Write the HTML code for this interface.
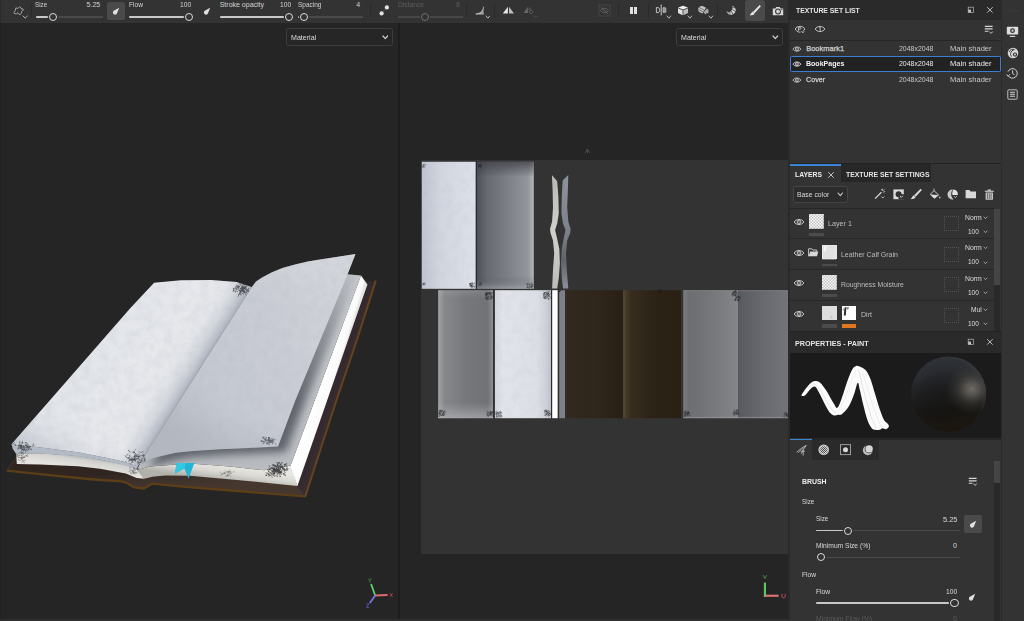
<!DOCTYPE html>
<html>
<head>
<meta charset="utf-8">
<title>Substance Painter</title>
<style>
*{box-sizing:border-box;margin:0;padding:0}
html,body{width:1024px;height:621px;overflow:hidden;background:#252525;font-family:"Liberation Sans",sans-serif;font-size:7px;color:#d0d0d0}
#root{position:absolute;left:0;top:0;width:1024px;height:621px;overflow:hidden;background:#252525}
.b{position:absolute;display:block}
.t{position:absolute;white-space:nowrap;line-height:10px;transform-origin:0 0;display:block}
</style>
</head>
<body>
<div id="root">
<div class="b" style="left:0px;top:22px;width:789px;height:599px;background:#252525;">
</div>
<div class="b" style="left:398px;top:22px;width:1.6px;height:599px;background:#1d1d1d;">
</div>
<div class="b" style="left:0px;top:22px;width:1.2px;height:599px;background:#202020;">
</div>
<div class="b" style="left:0px;top:618.8px;width:789px;height:2.2px;background:#2e2e2e;">
</div>
<div class="b" style="left:421px;top:160.2px;width:367px;height:393.4px;background:#333333;">
</div>
<svg class="b" style="left:421px;top:160px;" width="367" height="394" viewBox="0 0 367 394">
<defs>
<linearGradient id="t1" x1="0" x2="1" y1="0" y2="0">
<stop offset="0" stop-color="#bfc4cf"/>
<stop offset="0.35" stop-color="#d2d6df"/>
<stop offset="1" stop-color="#dde1e9"/>
</linearGradient>
<linearGradient id="t2" x1="0" x2="1" y1="0" y2="0">
<stop offset="0" stop-color="#4e5158"/>
<stop offset="0.18" stop-color="#676a71"/>
<stop offset="0.6" stop-color="#808389"/>
<stop offset="0.9" stop-color="#93969c"/>
<stop offset="1" stop-color="#b2b5ba"/>
</linearGradient>
<linearGradient id="t2v" x1="0" x2="0" y1="0" y2="1">
<stop offset="0" stop-color="#3c3e44" stop-opacity="0.75"/>
<stop offset="0.12" stop-color="#3c3e44" stop-opacity="0"/>
<stop offset="0.9" stop-color="#3c3e44" stop-opacity="0"/>
<stop offset="1" stop-color="#b0b3b8" stop-opacity="0.5"/>
</linearGradient>
<linearGradient id="tA" x1="0" x2="1" y1="0" y2="0">
<stop offset="0" stop-color="#a2a4a8"/>
<stop offset="0.12" stop-color="#858789"/>
<stop offset="0.5" stop-color="#76787b"/>
<stop offset="0.9" stop-color="#707275"/>
<stop offset="1" stop-color="#8e9093"/>
</linearGradient>
<linearGradient id="tAv" x1="0" x2="0" y1="0" y2="1">
<stop offset="0" stop-color="#b0b2b6" stop-opacity="0.25"/>
<stop offset="0.06" stop-color="#b0b2b6" stop-opacity="0"/>
<stop offset="0.88" stop-color="#b0b2b6" stop-opacity="0"/>
<stop offset="1" stop-color="#b4b6ba" stop-opacity="0.65"/>
</linearGradient>
<linearGradient id="tB" x1="0" x2="1" y1="0" y2="0">
<stop offset="0" stop-color="#d4d7df"/>
<stop offset="0.15" stop-color="#e2e4ea"/>
<stop offset="0.75" stop-color="#dcdfe6"/>
<stop offset="0.92" stop-color="#cdd0d8"/>
<stop offset="1" stop-color="#bcc0c8"/>
</linearGradient>
<linearGradient id="tC" x1="0" x2="1" y1="0" y2="0">
<stop offset="0" stop-color="#33291e"/>
<stop offset="0.5" stop-color="#2f271b"/>
<stop offset="1" stop-color="#282014"/>
</linearGradient>
<linearGradient id="tD" x1="0" x2="1" y1="0" y2="0">
<stop offset="0" stop-color="#4a3d2a"/>
<stop offset="0.12" stop-color="#372d1f"/>
<stop offset="0.5" stop-color="#2b2316"/>
<stop offset="1" stop-color="#2a2113"/>
</linearGradient>
<linearGradient id="tE" x1="0" x2="1" y1="0" y2="0">
<stop offset="0" stop-color="#7c7e82"/>
<stop offset="0.1" stop-color="#6c6e72"/>
<stop offset="0.6" stop-color="#78797d"/>
<stop offset="1" stop-color="#858689"/>
</linearGradient>
<linearGradient id="tF" x1="0" x2="1" y1="0" y2="0">
<stop offset="0" stop-color="#585a61"/>
<stop offset="0.4" stop-color="#65676d"/>
<stop offset="1" stop-color="#73757a"/>
</linearGradient>
<linearGradient id="sL" x1="0" x2="0" y1="0" y2="1">
<stop offset="0" stop-color="#b9b8b4"/>
<stop offset="0.5" stop-color="#d2d0ca"/>
<stop offset="1" stop-color="#bdbcb8"/>
</linearGradient>
<linearGradient id="sR" x1="0" x2="0" y1="0" y2="1">
<stop offset="0" stop-color="#8d939b"/>
<stop offset="0.5" stop-color="#7b818a"/>
<stop offset="0.75" stop-color="#5f646c"/>
<stop offset="1" stop-color="#8a9098"/>
</linearGradient>
<filter id="nzu" x="0" y="0" width="100%" height="100%">
<feTurbulence type="fractalNoise" baseFrequency="0.12" numOctaves="3" seed="9"/>
<feColorMatrix type="matrix" values="0 0 0 0 0.42  0 0 0 0 0.45  0 0 0 0 0.52  1.3 0 0 0 -0.5"/>
</filter>
</defs>
<rect x="0.8" y="1.8" width="54" height="127" fill="url(#t1)" />
<rect x="0.8" y="1.8" width="54" height="127" fill="#000" filter="url(#nzu)" opacity="0.22"/>
<rect x="56" y="1.8" width="56.8" height="127" fill="url(#t2)" />
<rect x="56" y="1.8" width="56.8" height="127" fill="url(#t2v)" />
<rect x="54.8" y="1.8" width="1.2" height="127" fill="#2a2b2e" />
<path d="M130.9 15 L131.6 30 L132 47 L131.1 61.5 L129 69 L129.5 73 L132 80.4 L133.2 93 L132 109.7 L131.1 128.4 L136.2 128.4 L137.8 118 L138.9 103.4 L138.3 88.8 L135.8 77.3 L134.1 70 L136.2 63.6 L137.8 53.2 L137.4 36.4 L136.2 21.8 L135.8 20.7 Z" fill="url(#sL)"/>
<path d="M147.3 15 L146.9 30 L146.2 47 L147.3 61.5 L149.6 69 L149.2 73 L146.2 80.4 L145 93 L145.8 109.7 L147.3 128.4 L142 128.4 L140.8 118 L140 103.4 L140.8 88.8 L142.9 77.3 L144.5 70 L142 63.6 L140.4 53.2 L140.8 36.4 L141.6 21.8 L142 20 Z" fill="url(#sR)"/>
<rect x="17.2" y="130.2" width="55" height="128" fill="url(#tA)" />
<rect x="17.2" y="130.2" width="55" height="128" fill="url(#tAv)" />
<rect x="72.2" y="130.2" width="1.7" height="128" fill="#2a2b2e" />
<rect x="73.9" y="130.2" width="56.1" height="128" fill="url(#tB)" />
<rect x="73.9" y="130.2" width="56.1" height="128" fill="#000" filter="url(#nzu)" opacity="0.2"/>
<rect x="130" y="130.2" width="1.2" height="128" fill="#2a2b2e" />
<rect x="131.2" y="130.2" width="5.6" height="128" fill="#ffffff" />
<rect x="136.8" y="130.2" width="1.4" height="128" fill="#2e2f32" />
<path d="M138.2 258.2 L138.2 132.8 L140.4 130.2 L144.2 130.2 L144.2 258.2 Z" fill="#7d8189"/>
<rect x="144.2" y="130.2" width="1.2" height="128" fill="#2a2a2a" />
<rect x="145.4" y="130.2" width="56" height="128" fill="url(#tC)" />
<rect x="201.4" y="130.2" width="1" height="128" fill="#1f1a10" />
<rect x="202.4" y="130.2" width="1.2" height="128" fill="#6a5a3e" />
<rect x="203.6" y="130.2" width="56.4" height="128" fill="url(#tD)" />
<rect x="262.3" y="130.2" width="54.9" height="128" fill="url(#tE)" />
<rect x="317.2" y="130.2" width="50.8" height="128" fill="url(#tF)" />
<rect x="262.3" y="256.8" width="105.7" height="1.4" fill="#9a9b9e" opacity="0.55"/>
<rect x="262.3" y="130.2" width="105.7" height="1" fill="#8a8b8e" opacity="0.5"/>
<path d="M49.0 123.7 L49.0 124.4 M50.0 123.4 L51.0 122.5 M51.0 125.2 L50.1 126.1 M52.4 124.0 L52.9 124.1 M53.2 127.5 L52.5 128.3 M50.2 126.0 L50.4 125.7 M53.4 123.6 L53.7 122.8 M50.7 128.2 L50.0 127.7 M50.4 124.2 L51.4 124.2 M49.5 123.4 L49.1 123.7 M51.8 126.6 L51.7 126.9 M49.8 124.8 L49.1 124.6 M50.7 126.2 L50.6 125.4 M50.8 125.7 L50.9 126.1 M50.4 123.6 L49.7 124.1 M50.2 125.6 L50.1 126.4 M53.3 126.6 L52.3 126.8 M51.2 127.7 L50.8 127.5 M48.8 126.7 L48.9 125.8 M53.4 126.8 L54.4 125.9 M49.1 123.9 L50.1 124.5 M50.7 123.0 L51.4 123.1 M49.1 124.8 L48.9 124.0 M51.1 123.1 L51.6 122.5 M49.5 125.6 L50.4 125.9 M51.9 123.7 L51.6 124.8 M53.4 123.2 L53.4 123.4 M51.7 125.1 L52.0 125.7 M51.4 126.2 L50.3 126.4 M53.0 126.8 L52.6 126.5 M51.0 126.2 L50.2 125.3 M49.1 123.3 L48.8 124.3 M51.4 125.7 L51.5 126.8 M49.9 126.4 L49.9 125.7 M51.2 123.1 L51.4 123.5 M53.0 125.6 L52.9 126.1 M51.2 127.1 L50.3 128.1 M49.8 124.8 L48.8 125.5 M48.4 123.8 L49.2 124.1 M50.9 124.8 L49.8 125.9 M49.4 123.4 L49.7 124.1" stroke="#1c1e22" stroke-width="0.6" opacity="0.48" fill="none" stroke-linecap="round"/>
<path d="M110.3 127.5 L110.4 128.3 M111.4 124.7 L111.5 123.7 M109.0 124.7 L108.6 124.9 M108.9 127.7 L108.8 126.8 M108.2 124.0 L108.0 124.6 M108.5 125.6 L108.5 126.0 M110.6 123.5 L110.5 122.5 M111.0 128.0 L112.0 129.0 M106.9 124.4 L106.6 123.9 M107.5 127.6 L107.5 127.7 M106.9 127.9 L106.6 127.2 M106.4 126.5 L106.3 125.4 M111.3 125.9 L110.7 125.0 M106.6 124.6 L105.5 124.3 M110.4 126.8 L110.2 127.4 M111.4 126.6 L112.2 125.7 M109.4 125.0 L108.4 125.8 M110.8 125.0 L111.9 124.9 M106.6 126.9 L106.2 127.9 M108.5 124.8 L109.5 124.6 M108.5 128.1 L107.7 129.0 M110.1 125.6 L110.9 126.6 M111.0 124.4 L110.8 125.3 M109.3 126.6 L109.6 126.3 M108.4 127.2 L109.2 126.7 M107.0 124.2 L106.0 123.1 M106.5 127.7 L105.6 127.5 M108.2 123.7 L108.2 122.7 M110.8 127.3 L109.9 126.9 M110.9 123.9 L112.0 124.4 M107.1 127.9 L107.3 126.9 M106.6 124.6 L105.8 123.5 M110.6 126.8 L110.2 127.5 M108.1 127.0 L108.5 127.0 M110.3 126.0 L110.8 126.4 M107.0 126.2 L106.1 126.0 M111.5 127.8 L111.1 127.5 M111.5 125.8 L111.0 126.7 M111.4 126.8 L112.1 126.5 M109.3 127.9 L109.4 127.7 M107.5 123.9 L108.0 124.5" stroke="#1c1e22" stroke-width="0.6" opacity="0.44" fill="none" stroke-linecap="round"/>
<path d="M58.8 6.2 L59.7 5.4 M60.6 5.0 L60.6 5.1 M59.2 4.5 L59.5 3.6 M57.7 5.9 L58.7 5.1 M58.1 6.6 L57.6 6.9 M59.7 5.4 L59.0 4.4 M59.9 6.4 L59.4 6.0 M59.7 6.6 L60.4 7.1 M59.3 6.1 L58.4 6.6 M59.2 5.3 L59.5 5.7 M58.7 6.6 L59.0 7.4 M59.4 7.0 L60.4 6.6 M57.6 5.4 L58.0 5.2 M59.8 6.8 L59.5 6.3 M59.1 6.0 L59.1 5.5 M57.7 5.5 L58.1 5.0 M57.7 7.1 L57.8 7.0 M60.4 5.7 L59.5 5.2 M59.5 5.3 L60.0 5.1 M60.3 5.0 L61.2 4.0 M59.5 7.5 L59.8 8.6 M57.7 5.5 L58.4 5.0 M58.1 5.8 L57.1 5.8 M58.2 5.1 L58.0 6.1" stroke="#1c1e22" stroke-width="0.6" opacity="0.32" fill="none" stroke-linecap="round"/>
<path d="M2.2 6.0 L2.9 4.9 M2.1 5.7 L1.9 6.4 M1.7 7.3 L1.8 8.0 M1.9 4.6 L2.2 5.1 M1.9 6.8 L2.8 6.6 M3.4 5.2 L3.1 4.4 M2.2 6.8 L2.2 7.5 M1.7 5.7 L2.1 6.8 M4.0 4.7 L3.0 5.0 M3.2 4.9 L3.3 3.9 M3.5 7.4 L4.2 6.8 M4.4 6.4 L4.7 5.8 M3.7 5.5 L2.8 4.5 M2.2 6.3 L1.9 5.3 M1.7 5.2 L2.7 4.4 M2.0 5.7 L2.0 5.0 M2.4 6.9 L1.4 7.8 M2.3 7.4 L2.8 6.6 M3.5 7.3 L3.8 7.5 M4.3 4.8 L4.9 5.0 M2.0 6.7 L3.1 7.0" stroke="#1c1e22" stroke-width="0.6" opacity="0.28" fill="none" stroke-linecap="round"/>
<path d="M4.2 122.9 L3.7 123.6 M3.4 125.3 L2.7 124.9 M2.0 125.0 L1.2 125.6 M3.5 124.0 L2.4 123.7 M2.8 123.6 L2.5 123.5 M1.8 124.4 L1.8 125.4 M3.0 124.3 L2.0 124.6 M2.7 123.4 L2.0 122.9 M2.6 123.1 L3.1 122.5 M3.8 123.7 L4.6 124.0 M2.6 124.2 L3.0 124.9 M2.7 124.0 L1.9 123.4 M3.3 124.8 L3.1 123.8 M2.3 123.7 L2.2 124.7 M3.9 123.7 L3.5 122.7 M2.9 123.0 L2.4 123.9 M3.9 123.3 L3.1 123.6 M4.3 124.4 L4.5 124.4 M1.8 124.5 L2.0 123.4 M3.6 124.3 L2.7 124.0 M1.9 124.0 L1.5 123.7" stroke="#1c1e22" stroke-width="0.6" opacity="0.24" fill="none" stroke-linecap="round"/>
<path d="M60.2 124.4 L60.6 124.5 M58.1 125.1 L58.8 125.1 M58.8 124.9 L58.0 125.1 M58.9 123.4 L59.5 123.7 M60.3 124.0 L60.3 123.9 M60.2 123.1 L59.7 122.1 M57.7 123.8 L56.8 123.8 M59.3 124.9 L58.5 125.0 M58.7 122.8 L58.4 123.8 M58.3 123.9 L57.6 123.6 M60.0 124.7 L59.0 123.9 M60.1 125.1 L60.3 125.1 M59.5 124.2 L60.4 124.3 M60.2 123.1 L60.2 123.7 M59.4 123.1 L58.7 122.2 M58.7 124.9 L59.3 124.9 M59.9 122.7 L59.4 121.9 M59.2 125.4 L58.6 125.4 M59.2 123.7 L58.9 124.2 M60.0 124.1 L59.5 123.0 M59.3 123.2 L60.3 122.5" stroke="#1c1e22" stroke-width="0.6" opacity="0.24" fill="none" stroke-linecap="round"/>
<path d="M65.8 137.8 L65.5 138.6 M65.2 138.9 L65.7 139.5 M65.2 134.4 L64.7 134.6 M66.0 133.6 L65.8 133.9 M67.0 135.5 L66.9 136.3 M65.7 134.1 L65.1 133.3 M67.6 137.0 L68.4 136.4 M69.4 134.8 L69.7 135.5 M68.9 138.8 L69.7 139.6 M71.0 133.8 L70.1 134.5 M66.8 132.7 L66.1 132.6 M70.4 136.3 L70.0 135.3 M65.8 133.8 L66.6 133.1 M70.4 137.6 L69.9 136.9 M65.0 137.9 L64.5 137.3 M67.4 136.8 L68.0 136.8 M67.4 133.2 L68.3 133.3 M67.3 138.8 L66.4 139.7 M67.7 133.3 L68.5 133.6 M70.6 138.3 L71.6 137.6 M65.8 136.2 L65.0 136.5 M66.9 134.3 L67.6 133.3 M69.3 134.0 L68.6 134.1 M65.3 133.0 L64.7 131.9 M68.9 133.0 L68.5 132.2 M65.9 138.6 L64.8 138.7 M65.4 134.5 L65.7 135.5 M66.6 137.6 L66.4 138.2 M71.4 132.6 L71.3 133.2 M64.8 134.3 L65.0 133.4 M69.8 133.6 L70.4 132.5 M70.1 137.0 L71.2 136.1 M64.7 134.0 L63.8 133.5 M70.8 138.7 L70.8 139.0 M65.7 134.3 L65.4 135.0 M65.9 136.9 L65.3 135.9 M68.3 133.0 L68.7 133.8 M65.3 134.7 L65.7 133.7 M65.8 137.7 L66.5 137.4 M69.3 138.1 L69.2 138.1 M66.4 132.8 L66.3 133.3 M71.1 136.9 L72.2 137.6 M69.7 132.9 L70.1 133.8 M65.2 138.8 L66.3 139.0 M69.0 136.4 L69.4 136.9 M65.2 135.1 L65.0 134.3 M67.6 139.0 L67.3 137.9 M64.7 137.7 L64.7 138.0 M67.2 133.9 L66.9 133.6 M68.9 133.4 L68.7 133.2 M66.5 139.1 L66.8 139.5 M68.9 132.8 L69.1 132.3 M68.7 134.9 L68.3 134.6 M64.9 136.1 L64.8 135.2 M70.5 136.9 L71.2 136.4 M70.5 138.4 L70.5 138.3 M70.1 138.1 L69.2 138.8 M65.8 133.3 L66.4 133.9 M68.5 133.1 L68.0 132.8 M65.6 133.9 L66.6 133.7" stroke="#1c1e22" stroke-width="0.6" opacity="0.6" fill="none" stroke-linecap="round"/>
<path d="M22.6 255.2 L22.0 254.9 M21.6 253.2 L20.7 252.3 M18.2 256.0 L19.0 256.9 M22.2 254.6 L22.8 254.7 M22.3 252.8 L22.5 252.5 M23.1 253.9 L22.4 253.8 M18.2 253.6 L17.9 253.2 M18.2 253.8 L18.5 252.9 M22.1 250.1 L22.1 250.0 M18.3 253.3 L17.7 252.2 M22.1 255.5 L21.9 254.7 M22.2 254.7 L22.3 255.6 M22.7 252.4 L23.1 251.6 M21.5 254.6 L21.1 255.6 M24.0 255.0 L24.2 254.9 M23.1 253.1 L23.3 253.5 M23.9 251.3 L23.1 252.1 M23.4 251.8 L23.5 252.1 M18.1 250.3 L18.7 250.4 M20.0 250.7 L19.7 251.6 M23.3 250.6 L23.0 250.8 M20.0 255.3 L19.7 254.4 M18.4 255.9 L18.1 256.1 M23.3 254.9 L24.0 254.8 M21.9 255.5 L22.1 255.4 M18.4 252.0 L19.5 251.0 M19.9 250.0 L19.0 250.6 M21.5 250.8 L20.9 250.9 M19.0 255.7 L18.0 255.9 M20.3 252.0 L20.8 251.4 M22.5 251.8 L22.7 252.9 M23.7 251.3 L24.7 252.4 M20.8 250.9 L21.5 250.5 M20.0 250.6 L19.7 250.0 M21.3 251.7 L20.6 251.2 M18.9 251.3 L18.3 251.9 M19.9 255.0 L19.3 254.5 M22.0 253.1 L21.7 254.2 M19.4 255.1 L19.5 254.4 M19.9 252.9 L19.4 253.4 M18.2 250.5 L18.9 250.6 M21.0 254.7 L22.0 254.0 M19.4 252.7 L20.3 253.7 M18.4 254.1 L19.5 253.2 M20.3 251.4 L19.3 251.9 M18.2 254.5 L19.2 253.8 M22.6 253.0 L21.5 253.7 M18.2 254.0 L17.3 254.5 M19.0 252.8 L18.1 252.9 M20.2 255.7 L20.7 255.2" stroke="#1c1e22" stroke-width="0.6" opacity="0.56" fill="none" stroke-linecap="round"/>
<path d="M69.4 252.9 L69.6 252.4 M66.4 255.1 L66.9 255.9 M70.0 253.2 L70.7 252.9 M71.2 255.7 L71.9 256.3 M70.8 255.2 L70.8 255.3 M66.2 255.7 L65.9 255.7 M70.7 252.5 L71.5 252.0 M67.1 256.1 L66.9 256.6 M69.3 252.3 L69.9 251.8 M66.2 251.3 L66.6 252.1 M66.3 255.4 L66.6 254.7 M68.1 255.2 L68.7 254.8 M66.3 253.3 L66.4 252.2 M67.4 252.6 L66.8 253.4 M70.1 253.1 L71.0 252.7 M71.4 253.5 L71.5 253.2 M67.9 255.9 L68.6 254.9 M71.2 253.2 L71.9 252.8 M71.2 255.5 L71.4 254.9 M68.9 251.3 L69.8 252.1 M70.4 252.2 L71.4 251.9 M70.0 255.3 L69.5 254.2 M70.7 253.3 L71.1 254.3 M67.4 255.4 L67.8 254.8 M66.5 254.5 L67.3 255.1 M66.0 254.6 L65.2 254.4 M69.4 253.9 L69.3 255.0 M69.8 254.5 L68.7 254.6 M67.9 252.4 L68.4 253.3 M67.0 253.4 L67.3 254.2 M71.2 251.7 L70.4 252.1 M69.5 254.3 L69.5 253.3 M69.3 251.0 L69.7 252.0 M68.7 255.4 L68.5 255.9 M68.1 253.5 L67.4 254.1 M69.7 253.0 L69.4 253.8 M66.0 251.4 L65.8 251.3 M68.2 252.6 L67.3 252.1 M68.9 251.3 L68.7 252.2 M70.4 253.5 L71.2 252.4 M71.1 253.7 L70.5 254.2 M69.2 253.7 L69.8 254.0 M69.8 255.1 L69.3 254.6 M71.1 252.2 L71.4 251.2 M66.9 252.5 L66.2 253.2" stroke="#1c1e22" stroke-width="0.6" opacity="0.48" fill="none" stroke-linecap="round"/>
<path d="M127.6 136.4 L126.6 136.8 M125.5 137.1 L125.3 137.2 M124.0 134.7 L124.9 135.3 M126.5 134.1 L126.2 133.2 M124.7 138.7 L124.4 138.1 M124.1 132.5 L123.5 133.1 M128.3 134.8 L127.7 133.7 M127.0 136.6 L125.9 136.0 M127.1 133.4 L127.2 133.1 M124.7 133.1 L124.3 132.8 M128.1 136.6 L128.2 136.2 M123.8 138.2 L124.2 138.2 M123.7 133.5 L122.7 133.8 M125.0 132.8 L125.0 133.0 M125.0 136.8 L124.3 135.9 M127.7 134.0 L128.1 134.5 M125.6 138.0 L126.6 137.8 M123.7 132.8 L122.7 131.9 M123.7 134.9 L122.8 135.2 M125.8 133.4 L125.0 132.3 M129.0 136.7 L128.4 135.6 M124.7 134.4 L125.1 134.8 M128.0 132.2 L127.6 131.9 M124.9 136.0 L125.9 135.4 M122.9 135.2 L121.9 134.3 M129.1 133.9 L129.8 132.8 M124.2 136.1 L123.7 136.9 M128.1 134.1 L127.4 133.7 M125.5 133.7 L125.4 134.3 M127.3 133.3 L127.2 134.1 M125.3 133.3 L125.7 132.9 M126.2 134.9 L126.6 134.6 M127.1 138.3 L127.7 139.4 M126.8 135.6 L126.4 135.0 M124.7 136.3 L124.9 137.2 M122.9 133.2 L123.5 132.5 M125.8 132.3 L126.0 131.2 M127.0 135.4 L126.8 134.4 M125.4 137.0 L124.9 136.8 M126.8 133.6 L126.5 132.7 M129.1 137.0 L129.9 137.9 M123.0 133.4 L123.6 134.3 M127.5 138.9 L127.4 139.6 M123.8 138.8 L122.7 138.2 M127.8 136.0 L127.4 135.2 M126.9 132.5 L127.8 131.7 M127.2 137.9 L127.7 138.6 M128.8 138.3 L128.9 138.7 M127.4 135.2 L128.2 135.0 M127.5 132.3 L128.5 131.3 M122.8 135.2 L123.1 134.2 M124.4 137.7 L124.9 138.3 M124.5 132.3 L124.2 132.5 M123.8 136.5 L123.1 135.6 M123.4 137.7 L122.6 136.7 M126.4 133.8 L125.8 134.8 M124.5 138.5 L123.4 137.7 M122.7 137.4 L123.7 137.8 M122.9 137.3 L123.0 136.7 M123.1 133.3 L123.6 132.9" stroke="#1c1e22" stroke-width="0.6" opacity="0.6" fill="none" stroke-linecap="round"/>
<path d="M76.3 252.6 L75.6 253.2 M76.1 254.6 L75.3 253.9 M78.1 251.9 L78.5 252.2 M78.2 253.8 L77.4 254.6 M75.7 257.3 L75.7 257.2 M78.7 255.4 L77.8 255.5 M77.6 253.9 L77.2 252.9 M80.2 254.5 L79.3 253.9 M80.6 255.9 L79.8 255.5 M77.7 253.7 L78.4 254.5 M78.9 252.3 L78.6 252.2 M77.8 253.7 L78.0 252.9 M75.7 256.1 L76.4 256.3 M76.9 253.2 L77.8 253.2 M75.3 252.2 L76.0 252.3 M79.4 255.1 L79.7 254.6 M80.4 255.8 L79.4 255.8 M76.3 255.7 L76.5 256.0 M75.5 253.5 L74.4 254.4 M75.7 256.0 L75.2 256.2 M79.8 252.4 L79.3 253.4 M77.2 252.4 L76.7 252.9 M77.7 256.0 L77.4 255.1 M77.4 255.8 L76.9 256.5 M80.5 253.0 L80.6 252.3 M79.1 251.9 L79.4 250.9 M79.3 251.8 L79.9 252.7 M77.1 252.7 L78.0 253.8 M77.6 256.9 L77.8 255.8 M76.0 252.0 L76.1 252.1 M76.7 254.5 L76.3 253.6 M80.3 256.1 L81.3 256.3 M79.0 257.1 L78.5 256.2 M79.8 253.7 L79.4 252.7 M80.5 255.7 L80.0 256.4 M75.9 254.5 L75.3 254.5 M76.2 253.3 L76.6 252.8 M79.2 256.0 L79.9 257.1 M74.8 253.1 L74.6 253.4 M75.0 252.1 L74.1 252.4 M75.5 255.8 L75.5 255.1 M76.9 252.2 L75.9 251.6 M78.4 257.4 L79.0 257.1 M76.2 256.7 L76.7 256.9 M74.9 254.5 L74.6 254.9 M75.8 253.3 L76.7 254.4 M76.5 257.1 L75.6 258.1 M79.8 252.2 L80.2 252.1 M75.0 251.4 L75.4 252.2 M74.9 257.0 L75.2 256.4" stroke="#1c1e22" stroke-width="0.6" opacity="0.48" fill="none" stroke-linecap="round"/>
<path d="M124.8 255.7 L125.4 255.9 M128.8 255.2 L129.7 254.5 M123.6 251.4 L123.2 250.7 M125.3 251.2 L126.1 250.8 M125.0 251.2 L124.9 251.1 M124.0 251.8 L123.9 251.4 M125.7 253.6 L125.0 253.7 M124.4 250.2 L125.1 249.7 M127.4 256.0 L127.1 255.0 M126.6 252.9 L126.2 252.3 M125.3 254.6 L126.1 253.9 M128.9 251.8 L129.5 252.0 M126.7 252.2 L126.3 251.1 M127.6 254.5 L128.3 253.5 M126.8 253.8 L127.6 253.7 M125.7 254.0 L126.2 253.5 M124.6 251.4 L125.4 251.7 M127.6 251.3 L127.4 251.0 M126.8 255.3 L127.7 255.9 M128.9 253.7 L128.9 253.0 M127.8 252.8 L128.0 252.0 M125.1 251.0 L125.5 251.7 M128.5 255.3 L129.5 254.7 M129.0 253.5 L128.3 253.7 M125.5 251.4 L126.1 252.4 M124.9 254.3 L123.8 253.5 M125.1 250.5 L124.4 250.0 M128.5 253.6 L127.6 252.6 M128.0 251.1 L126.9 250.3 M128.7 255.4 L129.3 254.8 M127.3 254.7 L126.8 255.3 M125.6 251.8 L126.0 252.5 M124.3 252.6 L123.5 252.1 M125.0 250.3 L124.2 251.1 M123.8 255.1 L124.5 255.6 M124.3 251.1 L124.8 251.5 M123.7 255.4 L124.7 254.8 M126.6 253.3 L126.0 253.9 M127.7 252.6 L128.7 251.8 M123.8 250.6 L123.4 250.0 M129.3 253.5 L129.5 253.8 M128.6 254.9 L128.1 254.9 M126.0 254.8 L125.4 253.8 M126.7 253.3 L126.2 252.6 M125.4 254.4 L125.0 254.3 M126.6 252.2 L126.3 252.2 M125.4 251.6 L124.9 252.1 M127.6 250.7 L127.6 250.8 M127.2 254.9 L128.3 253.9 M125.8 250.7 L126.1 250.9" stroke="#1c1e22" stroke-width="0.6" opacity="0.52" fill="none" stroke-linecap="round"/>
<path d="M314.5 135.5 L314.3 135.3 M313.5 131.4 L314.5 130.4 M313.1 135.8 L314.2 135.2 M313.8 131.9 L314.6 131.0 M314.6 134.3 L315.1 134.8 M315.7 133.5 L316.1 133.7 M312.5 132.7 L312.3 133.1 M315.1 133.6 L315.2 132.9 M315.0 133.7 L315.1 132.8 M314.0 135.9 L314.7 136.8 M313.2 132.4 L312.1 133.1 M314.9 131.6 L314.1 132.2 M313.7 134.9 L314.5 135.6 M311.7 134.1 L311.7 133.5 M311.7 132.5 L310.8 133.1 M314.1 134.6 L313.8 135.6 M314.3 134.1 L315.0 133.1 M312.7 133.1 L313.3 132.9 M315.0 131.3 L314.7 131.7 M316.2 135.3 L316.2 135.2 M312.3 134.0 L311.7 133.8 M314.1 132.2 L314.9 131.9 M313.8 134.2 L314.4 135.0 M316.0 136.0 L316.5 136.6 M313.9 131.2 L314.6 131.8 M314.2 134.9 L313.6 135.3 M312.2 131.8 L312.9 131.6 M311.5 136.1 L312.4 135.6 M312.9 131.9 L312.9 132.1 M316.0 135.6 L316.2 136.0 M314.2 131.3 L314.5 130.8 M312.0 133.6 L311.2 134.0 M314.9 131.1 L315.1 131.7 M311.7 135.2 L311.5 134.8 M312.0 135.0 L310.9 135.0 M313.4 133.6 L312.6 134.5 M313.2 133.0 L313.0 132.2 M315.7 132.6 L316.2 131.9 M312.6 131.3 L312.4 132.1 M314.5 133.4 L314.3 133.4 M316.4 134.0 L316.1 133.2" stroke="#1c1e22" stroke-width="0.6" opacity="0.56" fill="none" stroke-linecap="round"/>
<path d="M315.0 137.7 L314.9 138.1 M316.4 136.4 L316.6 137.5 M315.0 138.2 L313.9 138.9 M314.9 138.7 L315.1 138.4 M314.3 139.1 L314.1 139.7 M315.4 137.7 L315.8 137.2 M315.6 136.3 L315.2 136.3 M318.1 139.5 L317.9 140.5 M316.9 137.5 L317.5 136.6 M315.6 139.9 L315.5 139.9 M318.0 138.6 L317.7 138.4 M315.6 137.9 L315.6 138.1 M316.7 139.8 L316.9 139.3 M314.6 138.5 L314.8 139.4 M314.5 140.4 L313.6 140.0 M317.4 136.4 L318.3 136.9 M318.6 136.6 L319.6 137.6 M317.0 140.5 L316.6 140.6 M316.7 140.1 L317.3 139.9 M316.0 137.6 L316.7 137.2 M314.6 139.9 L314.4 139.4 M314.7 139.3 L314.5 140.2 M318.2 137.5 L319.2 136.9 M318.2 139.6 L318.9 139.2 M317.3 137.8 L317.6 137.9 M318.5 137.6 L318.5 138.2 M317.9 137.4 L318.9 137.3 M316.6 138.9 L316.2 139.4 M314.5 140.2 L313.8 141.0 M317.1 140.2 L317.7 141.1 M317.5 140.0 L317.1 140.2 M315.8 137.1 L315.2 136.9 M314.1 140.6 L313.1 140.1 M315.6 138.1 L316.1 137.4 M317.2 140.4 L317.3 141.0 M318.2 138.2 L319.1 138.3 M317.3 139.8 L317.0 139.3" stroke="#1c1e22" stroke-width="0.6" opacity="0.48" fill="none" stroke-linecap="round"/>
<path d="M268.0 254.0 L268.1 253.3 M266.7 254.8 L267.2 254.0 M267.1 251.9 L267.8 252.4 M265.9 253.6 L266.7 254.1 M267.2 253.4 L266.5 253.4 M265.8 255.2 L265.5 254.9 M263.5 254.0 L264.3 253.0 M266.0 254.4 L266.4 254.7 M268.5 254.7 L268.6 255.1 M264.3 256.0 L264.0 256.5 M263.9 252.9 L263.3 253.0 M264.8 254.4 L264.1 254.3 M264.0 254.2 L263.0 255.2 M268.0 253.1 L267.2 252.7 M264.4 256.0 L263.8 256.5 M266.4 254.4 L267.3 254.8 M264.6 251.0 L264.7 251.4 M267.6 251.7 L267.0 251.6 M265.3 251.8 L264.9 251.3 M265.7 256.0 L266.1 256.1 M263.7 253.9 L263.6 253.5 M266.1 253.4 L265.1 252.5 M266.3 253.9 L265.4 253.6 M264.2 255.4 L264.5 256.4 M264.6 251.6 L263.8 252.4 M267.2 252.6 L268.0 253.2 M267.1 252.2 L267.8 252.4 M268.3 253.4 L267.6 252.5 M266.4 254.8 L265.5 255.8 M266.8 254.9 L267.4 255.9 M265.7 253.0 L266.4 252.1 M264.9 254.3 L264.0 253.6 M267.0 252.2 L266.7 253.2 M263.4 252.4 L262.6 251.5 M263.9 252.2 L264.9 252.7 M265.4 251.1 L264.5 252.0 M268.7 255.7 L268.6 255.3 M264.3 252.4 L264.9 253.0 M264.6 255.0 L263.5 255.4 M264.1 255.6 L263.4 256.6 M267.9 252.7 L267.2 252.9 M264.4 251.1 L263.6 250.7 M266.2 253.3 L266.2 252.9 M267.6 252.2 L267.1 252.9 M263.7 255.6 L263.4 254.8" stroke="#1c1e22" stroke-width="0.6" opacity="0.48" fill="none" stroke-linecap="round"/>
<path d="M317.2 251.8 L318.0 252.7 M312.6 252.6 L312.4 253.2 M313.6 252.8 L313.3 253.6 M315.3 250.1 L316.3 250.6 M317.3 253.6 L317.2 253.1 M314.0 252.3 L313.2 252.0 M315.1 252.8 L315.1 252.6 M312.6 254.4 L311.7 253.6 M317.2 249.8 L317.0 250.1 M316.0 253.6 L315.8 254.7 M313.7 250.6 L313.8 251.4 M315.2 253.8 L315.1 252.9 M314.2 252.5 L314.9 252.4 M316.9 253.0 L316.1 253.2 M313.8 254.9 L312.7 255.2 M316.0 253.1 L315.1 252.1 M313.3 250.6 L313.4 250.6 M314.5 253.4 L315.3 252.5 M315.9 250.3 L316.2 250.3 M316.4 250.0 L317.0 250.9 M312.6 254.3 L313.0 255.2 M313.6 253.9 L313.8 254.0 M313.4 250.8 L312.6 251.4 M314.8 250.0 L315.7 249.5 M316.7 250.2 L315.6 251.1 M314.6 252.3 L314.5 252.7 M312.8 252.6 L313.6 253.0 M315.8 254.2 L316.0 254.8 M317.3 253.3 L317.4 254.2 M312.8 252.6 L312.1 252.9 M316.8 253.1 L316.9 253.4 M313.9 254.1 L314.7 254.7 M314.4 254.3 L314.1 254.2 M316.8 252.1 L316.9 252.0 M315.3 251.6 L316.2 252.3 M315.7 254.1 L316.4 254.8 M315.1 252.5 L315.3 251.5 M317.1 253.1 L317.4 253.9 M315.9 253.3 L316.0 254.0 M317.1 251.0 L317.0 251.2 M316.6 250.2 L315.9 251.1" stroke="#1c1e22" stroke-width="0.6" opacity="0.48" fill="none" stroke-linecap="round"/>
<path d="M365.5 254.9 L366.3 254.9 M364.5 253.2 L363.7 252.6 M365.6 254.2 L365.1 254.1 M364.3 253.9 L365.1 254.3 M363.7 254.2 L362.8 254.2 M366.6 254.6 L365.7 253.8 M364.6 253.2 L364.2 253.2 M366.2 255.3 L366.8 255.1 M364.8 255.4 L363.9 255.1 M363.4 256.7 L363.6 255.7 M363.2 257.0 L363.7 257.5 M365.5 255.1 L364.9 254.9 M366.1 255.4 L366.0 256.4 M365.4 255.6 L366.3 256.1 M365.9 256.5 L367.0 255.5 M365.6 255.1 L365.7 254.4 M363.0 253.5 L363.8 254.6 M366.9 253.2 L366.4 253.3 M366.2 256.7 L366.9 255.7 M363.1 256.1 L362.1 256.3 M364.5 254.2 L364.0 253.8 M364.9 254.2 L365.2 254.8 M365.5 255.6 L365.4 254.7 M365.2 253.0 L365.5 252.1 M365.9 253.3 L364.8 252.5 M365.2 256.8 L364.4 257.5 M366.7 256.1 L367.0 257.1 M366.5 255.8 L367.1 255.6 M364.5 253.8 L363.7 252.8 M366.8 253.8 L366.3 254.5" stroke="#1c1e22" stroke-width="0.6" opacity="0.4" fill="none" stroke-linecap="round"/>
<path d="M240.6 131.5 L241.2 132.0 M238.7 130.9 L237.8 130.9 M238.9 131.9 L238.2 133.0 M238.7 131.9 L239.0 131.4 M240.0 130.2 L240.6 129.5 M238.7 130.6 L238.4 130.8 M239.7 130.5 L239.1 129.5 M239.8 130.9 L240.6 129.9 M240.0 130.1 L238.9 131.2 M238.3 132.0 L238.3 131.1 M237.4 130.5 L238.0 130.6 M239.7 131.6 L239.8 132.7 M239.0 130.9 L238.2 131.3 M237.7 130.1 L238.6 130.0 M238.9 130.7 L239.4 131.1 M239.5 131.0 L238.7 131.4 M239.9 132.4 L239.8 131.7 M240.1 132.1 L239.7 132.7 M240.1 129.9 L239.2 130.3 M238.6 132.6 L238.7 132.5 M240.3 131.8 L239.9 131.9 M238.1 129.5 L238.3 128.9 M239.3 130.2 L240.3 131.2 M240.3 130.1 L240.8 129.1" stroke="#1c1e22" stroke-width="0.6" opacity="0.32" fill="none" stroke-linecap="round"/>
</svg>
<svg class="b" style="left:0px;top:240px;" width="398" height="262" viewBox="0 0 398 262">
<defs>
<linearGradient id="gLP" gradientUnits="userSpaceOnUse" x1="80.6" y1="18.1" x2="215.6" y2="104">
<stop offset="0" stop-color="#dadde3"/>
<stop offset="0.3" stop-color="#e2e5ea"/>
<stop offset="0.7" stop-color="#e6e8ec"/>
<stop offset="0.86" stop-color="#e4e6ea"/>
<stop offset="0.93" stop-color="#d2d6dc"/>
<stop offset="0.975" stop-color="#bcc1ca"/>
<stop offset="1" stop-color="#a8aeb8"/>
</linearGradient>
<linearGradient id="gLPv" gradientUnits="userSpaceOnUse" x1="150" y1="40" x2="60" y2="220">
<stop offset="0" stop-color="#ffffff" stop-opacity="0"/>
<stop offset="0.75" stop-color="#ffffff" stop-opacity="0"/>
<stop offset="1" stop-color="#9aa0ac" stop-opacity="0.35"/>
</linearGradient>
<linearGradient id="gFP" gradientUnits="userSpaceOnUse" x1="160" y1="160" x2="330" y2="90">
<stop offset="0" stop-color="#bcc1c9"/>
<stop offset="0.3" stop-color="#c5c9d1"/>
<stop offset="0.7" stop-color="#c9ccd4"/>
<stop offset="1" stop-color="#cfd2d8"/>
</linearGradient>
<linearGradient id="gFPv" gradientUnits="userSpaceOnUse" x1="300" y1="15" x2="230" y2="210">
<stop offset="0" stop-color="#d8dbe0" stop-opacity="0.4"/>
<stop offset="0.4" stop-color="#c0c4cc" stop-opacity="0"/>
<stop offset="0.8" stop-color="#9298a2" stop-opacity="0"/>
<stop offset="1" stop-color="#8a909a" stop-opacity="0.18"/>
</linearGradient>
<linearGradient id="gSP" gradientUnits="userSpaceOnUse" x1="297" y1="160" x2="317" y2="167">
<stop offset="0" stop-color="#7a7e86"/>
<stop offset="0.2" stop-color="#969aa2"/>
<stop offset="0.6" stop-color="#b6bac0"/>
<stop offset="1" stop-color="#caced3"/>
</linearGradient>
<linearGradient id="gSPb" gradientUnits="userSpaceOnUse" x1="200" y1="210" x2="202" y2="226">
<stop offset="0" stop-color="#7e838b"/>
<stop offset="0.5" stop-color="#9ea3ab"/>
<stop offset="1" stop-color="#bec2c8"/>
</linearGradient>
<linearGradient id="gSide" gradientUnits="userSpaceOnUse" x1="315" y1="160" x2="328" y2="164">
<stop offset="0" stop-color="#ffffff"/>
<stop offset="0.85" stop-color="#fafafa"/>
<stop offset="1" stop-color="#e6e6e6"/>
</linearGradient>
<linearGradient id="gFrontR" gradientUnits="userSpaceOnUse" x1="220" y1="225" x2="218" y2="240">
<stop offset="0" stop-color="#e8e6e1"/>
<stop offset="0.45" stop-color="#dad8d2"/>
<stop offset="1" stop-color="#b2b0aa"/>
</linearGradient>
<linearGradient id="gFrontL" gradientUnits="userSpaceOnUse" x1="80" y1="215" x2="78" y2="228">
<stop offset="0" stop-color="#a8abb0"/>
<stop offset="0.35" stop-color="#d2d2d0"/>
<stop offset="1" stop-color="#e6e4e0"/>
</linearGradient>
<linearGradient id="gCover" gradientUnits="userSpaceOnUse" x1="150" y1="230" x2="152" y2="252">
<stop offset="0" stop-color="#30261f"/>
<stop offset="0.5" stop-color="#3d322c"/>
<stop offset="1" stop-color="#45372e"/>
</linearGradient>
<linearGradient id="gCoverR" gradientUnits="userSpaceOnUse" x1="330" y1="160" x2="344" y2="165">
<stop offset="0" stop-color="#342a2e"/>
<stop offset="0.7" stop-color="#3a3034"/>
<stop offset="1" stop-color="#40322e"/>
</linearGradient>
<linearGradient id="gSP2" gradientUnits="userSpaceOnUse" x1="200" y1="220" x2="340" y2="60">
<stop offset="0" stop-color="#b6babf"/>
<stop offset="0.5" stop-color="#bcc0c5"/>
<stop offset="1" stop-color="#c8cbd0"/>
</linearGradient>
<filter id="bSh" x="-20%" y="-20%" width="140%" height="140%">
<feGaussianBlur stdDeviation="4"/>
</filter>
<linearGradient id="gShd" gradientUnits="userSpaceOnUse" x1="340" y1="22" x2="300" y2="160">
<stop offset="0" stop-color="#3a3e46" stop-opacity="0.1"/>
<stop offset="0.35" stop-color="#3a3e46" stop-opacity="0.45"/>
<stop offset="1" stop-color="#3a3e46" stop-opacity="1"/>
</linearGradient>
<filter id="nz" x="0" y="0" width="100%" height="100%">
<feTurbulence type="fractalNoise" baseFrequency="0.11" numOctaves="3" seed="4"/>
<feColorMatrix type="matrix" values="0 0 0 0 0.42  0 0 0 0 0.45  0 0 0 0 0.52  1.3 0 0 0 -0.5"/>
</filter>
</defs>
<polygon points="16.6,217.0 6.8,230.6 40.0,234.2 78.0,238.0 100.0,240.0 121.9,241.4 127.0,243.0 134.4,247.4 143.8,248.5 150.8,244.4 153.0,243.6 180.0,246.4 200.0,248.0 250.0,252.0 305.2,256.4 336.5,160.0 355.6,104.0 375.8,40.6 366.5,41.4 300.0,180.0 200.0,200.0 100.0,200.0" fill="url(#gCover)" />
<polygon points="297.4,246.0 305.2,256.8 336.5,160.0 355.6,104.0 375.8,40.6 366.5,41.4" fill="url(#gCoverR)" />
<polyline points="6.8,230.6 40.0,234.2 78.0,238.0 100.0,240.0 121.9,241.4 127.0,243.0 134.4,247.4 143.8,248.5 150.8,244.4 153.0,243.6 180.0,246.4 200.0,248.0 250.0,252.0 305.2,256.4" fill="none" stroke="#5c3e18" stroke-width="2.3" stroke-linejoin="round"/>
<polyline points="305.2,256.8 336.5,160.0 355.6,104.0 375.8,40.6" fill="none" stroke="#64441e" stroke-width="2" />
<polyline points="6.8,231.0 16.6,217.0" fill="none" stroke="#4a3a30" stroke-width="0.8" />
<polygon points="16.2,213.4 39.0,213.2 78.0,215.8 100.0,219.4 125.0,224.6 137.0,229.6 144.5,238.8 136.7,238.0 125.8,233.4 100.0,228.7 78.0,226.2 40.0,224.6 16.8,224.0" fill="url(#gFrontL)" />
<polygon points="137.0,230.0 150.0,226.4 190.0,223.6 230.0,226.6 264.2,230.3 291.4,225.6 297.4,246.0 258.0,242.0 220.0,238.4 190.0,235.8 165.0,235.4 152.3,236.8 144.5,238.8" fill="url(#gFrontR)" />
<polygon points="361.0,35.5 367.4,44.4 297.4,246.0 290.6,225.6" fill="url(#gSide)" />
<clipPath id="cSP">
<polygon points="251.9,47.0 347.9,34.3 361.0,35.5 290.6,225.6 264.2,230.3 230.0,226.6 190.0,223.6 150.0,226.4 137.0,230.0 140.6,222.0"/>
</clipPath>
<polygon points="251.9,47.0 347.9,34.3 361.0,35.5 290.6,225.6 264.2,230.3 230.0,226.6 190.0,223.6 150.0,226.4 137.0,230.0 140.6,222.0" fill="url(#gSP2)" />
<g clip-path="url(#cSP)">
<polygon points="251.9,47.0 256.0,41.6 262.0,37.6 272.0,32.2 282.4,28.0 295.0,24.4 307.8,21.4 320.0,19.4 333.1,17.6 355.5,14.0 347.1,35.5 322.0,96.0 295.5,160.0 278.0,206.5 248.6,207.9 219.3,209.2 190.0,211.2 175.8,212.8 156.0,217.2 140.6,222.0" fill="url(#gShd)" opacity="0.7" filter="url(#bSh)" transform="translate(8 5.5)"/>
</g>
<polygon points="11.3,204.4 39.0,207.3 78.0,212.2 107.4,218.0 125.0,222.0 138.0,226.6 137.0,230.0 125.0,225.0 100.0,219.8 78.0,216.2 39.0,213.6 16.0,213.8 12.6,208.6" fill="#b2bac6" />
<polygon points="154.1,42.7 180.8,40.3 211.3,40.1 236.7,41.9 251.9,47.0 140.6,222.0 137.6,226.4 125.0,222.0 107.4,218.0 78.0,212.2 39.0,207.3 11.3,204.4 130.0,68.6" fill="url(#gLP)" />
<polygon points="154.1,42.7 180.8,40.3 211.3,40.1 236.7,41.9 251.9,47.0 140.6,222.0 137.6,226.4 125.0,222.0 107.4,218.0 78.0,212.2 39.0,207.3 11.3,204.4 130.0,68.6" fill="url(#gLPv)" />
<clipPath id="cLP">
<polygon points="154.1,42.7 180.8,40.3 211.3,40.1 236.7,41.9 251.9,47.0 140.6,222.0 137.6,226.4 125.0,222.0 107.4,218.0 78.0,212.2 39.0,207.3 11.3,204.4 130.0,68.6"/>
</clipPath>
<rect x="0" y="30" width="260" height="240" filter="url(#nz)" clip-path="url(#cLP)" opacity="0.28"/>
<polygon points="251.9,47.0 256.0,41.6 262.0,37.6 272.0,32.2 282.4,28.0 295.0,24.4 307.8,21.4 320.0,19.4 333.1,17.6 355.5,14.0 347.1,35.5 322.0,96.0 295.5,160.0 278.0,206.5 248.6,207.9 219.3,209.2 190.0,211.2 175.8,212.8 156.0,217.2 140.6,222.0" fill="url(#gFP)" />
<polygon points="251.9,47.0 256.0,41.6 262.0,37.6 272.0,32.2 282.4,28.0 295.0,24.4 307.8,21.4 320.0,19.4 333.1,17.6 355.5,14.0 347.1,35.5 322.0,96.0 295.5,160.0 278.0,206.5 248.6,207.9 219.3,209.2 190.0,211.2 175.8,212.8 156.0,217.2 140.6,222.0" fill="url(#gFPv)" />
<clipPath id="cFP">
<polygon points="251.9,47.0 256.0,41.6 262.0,37.6 272.0,32.2 282.4,28.0 295.0,24.4 307.8,21.4 320.0,19.4 333.1,17.6 355.5,14.0 347.1,35.5 322.0,96.0 295.5,160.0 278.0,206.5 248.6,207.9 219.3,209.2 190.0,211.2 175.8,212.8 156.0,217.2 140.6,222.0"/>
</clipPath>
<rect x="130" y="10" width="235" height="220" filter="url(#nz)" clip-path="url(#cFP)" opacity="0.25"/>
<polyline points="251.9,47.0 140.6,222.0" fill="none" stroke="#9aa0aa" stroke-width="0.6" opacity="0.5"/>
<polygon points="176.8,223.0 194.4,223.0 188.5,238.6 184.4,228.6 174.8,233.8" fill="#21b6d6" />
<polygon points="176.8,223.0 186.0,223.0 184.4,228.6 174.8,233.8" fill="#35c6e2" />
<g opacity="0.7">
<path d="M30.1 210.1 Q30.9 209.3 30.9 209.2 M23.6 205.4 Q22.1 206.5 21.9 207.1 M29.0 206.5 Q29.7 205.7 30.7 206.6 M24.2 206.6 Q24.4 208.0 24.1 207.4 M26.8 206.8 Q26.6 206.8 26.0 206.2 M24.2 209.2 Q23.5 207.7 24.3 207.8 M20.8 205.2 Q22.4 206.4 21.5 206.0 M19.9 201.5 Q19.6 202.6 20.0 202.1 M13.3 203.8 Q14.4 203.8 14.6 202.8 M23.4 211.0 Q23.2 209.9 23.3 210.4 M18.8 208.4 Q18.9 209.3 18.9 209.1 M21.7 206.5 Q20.2 207.2 21.3 207.4 M20.4 207.4 Q20.4 209.0 21.0 209.1 M23.7 209.5 Q25.2 209.7 25.1 209.2 M12.0 204.6 Q10.4 205.5 11.1 206.4 M22.4 202.0 Q22.5 202.2 22.3 201.2 M19.7 205.8 Q19.7 205.7 19.4 205.4 M15.5 205.7 Q15.9 205.5 14.8 204.9 M26.2 209.5 Q27.4 210.4 28.0 211.1 M27.5 203.4 Q26.1 201.8 25.1 202.4 M23.0 207.7 Q23.4 207.2 22.4 206.4 M19.7 206.2 Q19.0 206.9 18.9 206.5 M28.4 206.9 Q28.1 205.9 27.2 206.8 M19.2 206.4 Q19.6 207.4 18.5 206.3 M28.3 209.7 Q27.2 210.3 27.6 210.4 M32.7 205.8 Q32.8 204.9 33.1 204.7 M18.7 205.5 Q19.1 204.1 18.7 205.1 M26.3 205.0 Q27.5 204.4 28.5 204.9 M23.0 206.8 Q24.2 205.3 24.9 206.4 M19.9 205.8 Q21.1 207.4 21.6 207.4 M19.3 208.1 Q18.4 208.7 18.3 208.0 M20.7 204.7 Q20.7 204.1 21.5 205.0 M26.7 206.7 Q26.1 208.2 26.7 207.9 M24.9 210.1 Q26.0 211.5 25.6 212.4 M12.0 207.2 Q11.2 207.9 10.2 207.2 M26.2 205.6 Q27.1 205.9 27.8 205.6 M20.5 208.2 Q21.7 208.6 22.7 209.4 M20.6 206.1 Q19.1 204.8 19.9 205.4 M25.4 204.5 Q25.7 205.4 25.5 205.6 M23.4 207.5 Q22.6 208.8 22.8 209.7 M21.4 210.8 Q22.4 209.3 22.8 208.4 M31.6 209.9 Q30.1 209.1 31.2 208.9 M25.5 207.5 Q24.7 208.3 23.8 209.2 M34.0 205.5 Q33.3 204.7 33.3 203.8 M22.1 205.9 Q20.5 207.5 20.1 207.7 M18.5 207.2 Q17.1 208.5 18.1 209.5 M24.7 209.9 Q26.2 210.0 26.6 210.4 M22.6 209.6 Q22.0 208.8 21.1 208.3 M29.0 206.2 Q29.4 206.7 30.4 206.4 M20.8 208.4 Q21.9 209.7 21.4 209.3 M16.0 205.6 Q16.4 204.8 15.3 204.2 M29.3 207.9 Q27.9 206.5 28.2 206.1 M12.1 206.7 Q10.9 206.7 11.6 205.8 M26.2 206.0 Q27.1 207.6 27.8 207.2 M28.2 208.4 Q29.5 207.7 30.4 206.9 M27.7 206.9 Q29.0 207.9 29.9 208.7 M22.8 202.7 Q21.8 202.5 21.0 202.9 M20.9 204.8 Q19.5 206.3 20.2 206.4 M26.6 204.3 Q26.3 203.8 25.7 202.7 M19.5 204.4 Q19.8 203.0 19.4 202.2" stroke="#1e2024" stroke-width="0.6" fill="none" stroke-linecap="round"/>
<g fill="#1e2024" opacity="0.8">
<circle cx="28.7" cy="209.4" r="0.64"/>
<circle cx="24.0" cy="206.6" r="0.54"/>
<circle cx="21.2" cy="205.5" r="0.67"/>
<circle cx="23.4" cy="210.1" r="0.65"/>
<circle cx="20.9" cy="207.3" r="0.74"/>
<circle cx="22.5" cy="202.9" r="0.74"/>
<circle cx="25.6" cy="208.9" r="0.46"/>
<circle cx="20.4" cy="206.3" r="0.56"/>
<circle cx="27.2" cy="209.0" r="0.45"/>
<circle cx="25.7" cy="205.3" r="0.54"/>
<circle cx="20.1" cy="207.8" r="0.40"/>
<circle cx="24.5" cy="209.4" r="0.66"/>
<circle cx="21.0" cy="207.9" r="0.41"/>
<circle cx="23.3" cy="207.3" r="0.56"/>
<circle cx="25.0" cy="207.3" r="0.52"/>
<circle cx="19.4" cy="207.0" r="0.40"/>
<circle cx="27.8" cy="206.3" r="0.49"/>
<circle cx="28.0" cy="207.6" r="0.71"/>
<circle cx="27.1" cy="208.0" r="0.76"/>
<circle cx="21.3" cy="205.2" r="0.59"/>
</g>
</g>
<g opacity="0.55">
<path d="M28.0 215.3 Q26.6 214.0 27.3 214.5 M20.5 220.2 Q20.9 220.4 20.1 220.3 M18.2 219.5 Q19.8 220.9 19.9 220.8 M21.9 217.7 Q20.4 217.6 20.0 217.3 M18.2 216.5 Q17.4 215.0 17.0 214.1 M16.0 216.4 Q16.6 215.4 17.4 216.1 M21.4 212.0 Q22.2 212.9 21.9 214.0 M24.7 220.6 Q25.3 220.4 25.4 220.4 M25.1 215.7 Q26.2 215.2 27.1 216.1 M18.2 217.8 Q19.6 218.5 19.5 217.9 M21.4 215.6 Q22.7 214.8 23.7 214.4 M26.5 216.0 Q26.5 216.0 26.9 216.2 M21.2 218.6 Q21.3 220.0 21.5 219.0 M21.0 212.0 Q20.0 212.8 19.0 213.1 M21.7 218.8 Q22.9 217.5 22.9 218.3 M22.1 218.7 Q23.3 218.5 23.8 217.4 M24.1 220.3 Q22.8 221.8 21.7 222.3 M24.3 217.3 Q25.3 216.2 24.6 216.6 M21.3 217.5 Q22.9 216.4 21.9 216.0 M21.9 215.8 Q21.4 214.3 21.3 214.9 M21.6 212.0 Q22.4 213.2 22.9 213.1 M22.7 220.6 Q22.1 219.4 22.0 220.2 M19.4 215.7 Q19.5 214.6 20.5 214.0 M19.5 215.4 Q18.0 215.6 17.2 214.6 M23.7 217.3 Q22.4 217.7 22.5 218.8 M24.2 216.9 Q24.0 216.1 24.2 216.4 M23.5 213.3 Q22.7 213.0 22.7 211.9 M25.0 217.6 Q23.8 218.3 23.2 217.4 M22.2 218.7 Q22.3 218.6 21.9 218.9 M23.5 222.0 Q25.0 222.7 24.9 222.8" stroke="#1e2024" stroke-width="0.6" fill="none" stroke-linecap="round"/>
<g fill="#1e2024" opacity="0.8">
<circle cx="26.8" cy="215.7" r="0.65"/>
<circle cx="21.9" cy="217.5" r="0.75"/>
<circle cx="21.5" cy="213.0" r="0.78"/>
<circle cx="19.0" cy="217.6" r="0.50"/>
<circle cx="21.4" cy="218.3" r="0.72"/>
<circle cx="22.1" cy="218.4" r="0.51"/>
<circle cx="21.5" cy="217.4" r="0.63"/>
<circle cx="22.5" cy="219.9" r="0.41"/>
<circle cx="23.4" cy="217.2" r="0.77"/>
<circle cx="24.4" cy="217.5" r="0.43"/>
</g>
</g>
<g opacity="0.75">
<path d="M135.4 221.4 Q135.0 221.7 135.3 220.7 M136.8 214.7 Q136.0 216.3 135.9 217.0 M128.6 217.7 Q127.5 218.2 128.4 218.2 M134.6 211.8 Q133.2 212.6 133.4 212.2 M138.4 214.0 Q139.1 215.3 139.6 216.2 M128.6 220.9 Q128.4 222.2 129.3 221.3 M137.1 218.8 Q138.6 218.6 138.8 218.2 M131.8 219.1 Q132.1 219.4 133.0 219.8 M143.0 214.0 Q144.6 214.6 143.8 215.4 M144.0 215.3 Q144.2 216.0 143.6 216.8 M134.6 218.2 Q135.8 219.8 134.9 220.5 M132.8 218.1 Q132.2 218.9 133.0 217.9 M134.0 216.3 Q134.7 215.8 135.5 216.8 M138.9 217.0 Q137.5 217.3 136.5 216.6 M129.8 219.6 Q128.7 218.2 129.5 217.7 M144.0 215.1 Q143.6 215.0 143.7 215.3 M129.2 215.2 Q130.6 215.3 130.4 215.7 M135.3 220.0 Q136.8 220.0 136.9 218.9 M129.9 219.3 Q128.4 219.7 128.7 218.7 M128.4 218.1 Q127.9 218.8 128.4 217.7 M141.3 219.0 Q142.8 218.2 142.7 218.4 M133.2 220.0 Q132.6 219.6 132.8 219.1 M135.1 216.2 Q135.4 216.9 134.9 216.3 M136.1 214.6 Q135.1 214.4 135.5 213.5 M133.2 219.8 Q134.3 219.6 135.1 218.9 M129.5 211.1 Q129.4 210.2 128.5 210.3 M138.0 222.9 Q139.0 221.9 138.6 222.6 M129.9 212.1 Q129.4 210.9 128.9 211.5 M132.3 220.0 Q132.1 219.7 133.0 218.9 M144.0 217.2 Q145.2 218.8 145.1 219.8 M137.9 215.9 Q138.6 217.0 139.0 217.0 M133.2 219.1 Q131.9 219.4 131.4 220.1 M144.0 219.1 Q144.6 220.5 145.5 221.4 M134.4 216.7 Q135.1 215.7 134.7 216.1 M126.0 221.3 Q126.4 220.8 125.8 221.6 M127.2 217.9 Q126.7 216.9 126.8 217.6 M138.8 222.5 Q140.1 223.4 140.9 222.3 M135.9 216.1 Q135.2 215.4 135.3 215.2 M127.3 218.0 Q125.7 216.6 124.9 215.8 M144.0 221.0 Q145.1 219.6 145.1 219.2 M131.1 221.1 Q131.4 220.6 130.7 220.2 M139.1 220.1 Q139.8 219.7 138.8 219.0 M130.7 220.4 Q131.6 220.0 132.3 220.3 M131.3 219.9 Q132.0 219.7 132.4 219.6 M135.2 221.3 Q135.8 220.0 135.6 219.8 M142.7 211.4 Q142.3 212.6 142.9 212.1 M140.9 221.5 Q141.4 222.7 142.1 223.1 M134.4 212.5 Q133.1 212.8 132.0 212.0 M135.2 216.0 Q133.9 214.7 134.8 214.0 M136.2 215.5 Q137.3 216.1 138.1 217.1 M127.9 214.0 Q126.4 214.9 126.5 215.4 M140.9 220.6 Q142.3 219.2 141.9 219.4 M135.1 219.2 Q134.3 219.6 134.9 219.3 M132.0 219.6 Q131.5 219.3 130.5 219.3 M139.6 216.4 Q140.4 215.3 140.8 215.9 M129.9 216.6 Q130.3 217.8 129.5 216.9 M134.9 210.0 Q134.9 209.8 135.4 209.1 M134.7 219.3 Q134.9 218.7 134.3 219.2 M133.0 222.2 Q132.7 223.4 132.9 222.9 M135.2 217.7 Q135.1 217.4 134.4 217.1 M131.6 222.4 Q130.5 224.0 130.4 224.2 M139.2 211.4 Q139.4 211.3 139.9 212.1 M129.1 220.3 Q130.5 220.2 129.9 219.6 M133.6 211.9 Q135.1 213.0 134.5 212.3 M137.7 222.0 Q138.9 223.3 138.3 224.1 M133.2 220.4 Q133.9 219.1 133.0 219.8 M133.9 220.2 Q134.2 220.7 133.1 220.4 M131.9 217.2 Q132.2 218.7 131.9 218.8 M137.6 218.9 Q138.2 217.7 139.0 218.6 M143.8 221.8 Q143.4 222.6 144.0 222.2" stroke="#1e2024" stroke-width="0.6" fill="none" stroke-linecap="round"/>
<g fill="#1e2024" opacity="0.8">
<circle cx="135.3" cy="220.5" r="0.36"/>
<circle cx="134.7" cy="212.8" r="0.36"/>
<circle cx="136.7" cy="218.5" r="0.58"/>
<circle cx="142.2" cy="215.7" r="0.61"/>
<circle cx="134.2" cy="216.4" r="0.58"/>
<circle cx="142.2" cy="215.5" r="0.62"/>
<circle cx="130.9" cy="218.9" r="0.63"/>
<circle cx="133.5" cy="219.4" r="0.52"/>
<circle cx="133.6" cy="219.3" r="0.50"/>
<circle cx="130.9" cy="213.1" r="0.47"/>
<circle cx="137.3" cy="216.1" r="0.48"/>
<circle cx="134.5" cy="216.8" r="0.59"/>
<circle cx="138.0" cy="221.4" r="0.63"/>
<circle cx="142.2" cy="220.2" r="0.49"/>
<circle cx="131.6" cy="219.7" r="0.54"/>
<circle cx="141.1" cy="212.5" r="0.56"/>
<circle cx="135.2" cy="216.2" r="0.36"/>
<circle cx="139.7" cy="219.9" r="0.72"/>
<circle cx="138.7" cy="216.5" r="0.65"/>
<circle cx="134.7" cy="218.9" r="0.78"/>
<circle cx="132.3" cy="221.3" r="0.56"/>
<circle cx="133.9" cy="212.9" r="0.47"/>
<circle cx="134.1" cy="219.5" r="0.55"/>
<circle cx="142.0" cy="220.8" r="0.65"/>
</g>
</g>
<g opacity="0.55">
<path d="M133.1 231.9 Q132.8 230.8 131.8 230.6 M134.3 227.8 Q133.4 227.9 132.9 227.1 M134.4 231.9 Q135.7 232.9 136.4 233.6 M133.7 232.6 Q134.2 233.4 134.9 234.2 M130.1 229.2 Q130.1 228.1 130.0 227.2 M137.6 229.4 Q137.7 228.8 138.7 228.9 M136.6 228.4 Q136.6 228.1 136.8 228.0 M131.4 234.4 Q130.0 233.0 130.3 232.5 M130.2 230.5 Q129.7 232.1 129.1 231.9 M134.0 233.7 Q133.3 233.2 133.9 232.8 M134.0 230.5 Q132.5 229.6 133.1 229.9 M133.2 232.8 Q132.1 232.7 131.1 233.1 M137.9 228.0 Q138.7 229.4 137.6 229.0 M133.4 229.0 Q134.8 229.4 135.5 228.9 M134.0 233.0 Q132.8 232.6 133.8 232.3 M133.8 231.0 Q132.7 231.9 132.4 231.5 M135.6 230.8 Q134.7 229.3 133.7 228.6 M132.4 230.0 Q130.9 229.9 130.3 231.1 M135.2 232.7 Q136.1 232.4 137.2 232.4 M132.4 231.3 Q132.2 230.5 133.0 231.2" stroke="#1e2024" stroke-width="0.6" fill="none" stroke-linecap="round"/>
<g fill="#1e2024" opacity="0.8">
<circle cx="133.1" cy="231.7" r="0.76"/>
<circle cx="133.6" cy="232.3" r="0.39"/>
<circle cx="135.9" cy="228.9" r="0.42"/>
<circle cx="133.8" cy="233.2" r="0.60"/>
<circle cx="136.9" cy="228.6" r="0.78"/>
<circle cx="133.6" cy="231.0" r="0.39"/>
<circle cx="134.8" cy="232.4" r="0.46"/>
</g>
</g>
<g opacity="0.75">
<path d="M236.6 44.8 Q237.5 46.2 238.1 47.1 M233.5 50.2 Q234.0 51.5 233.1 51.4 M241.1 52.6 Q241.3 51.0 240.7 50.5 M246.5 45.7 Q245.4 46.7 244.6 46.9 M248.5 48.6 Q247.6 47.7 248.7 48.5 M238.7 55.0 Q238.8 55.6 238.1 56.6 M237.4 42.0 Q238.7 41.4 238.4 40.6 M243.9 49.6 Q244.2 48.0 244.6 47.6 M238.5 54.1 Q238.4 53.5 238.3 54.0 M248.5 51.6 Q247.0 52.4 247.7 51.3 M237.7 51.7 Q236.1 50.2 235.4 51.3 M243.1 53.7 Q244.5 55.1 244.1 54.7 M234.6 47.6 Q233.3 48.4 234.0 49.2 M242.5 48.0 Q242.0 48.4 243.0 48.0 M245.2 46.6 Q244.6 46.0 243.9 45.1 M244.4 52.5 Q246.0 51.4 245.0 52.5 M238.7 49.8 Q239.0 50.9 238.9 50.7 M248.5 51.0 Q247.0 51.0 247.8 50.1 M239.9 42.0 Q240.4 42.9 239.5 42.8 M242.8 46.3 Q242.6 47.8 243.4 48.9 M236.8 49.6 Q237.6 49.5 237.1 49.3 M243.2 51.0 Q244.8 52.5 245.1 52.5 M243.5 49.9 Q244.4 51.1 244.1 51.7 M241.9 43.6 Q242.4 44.4 242.1 44.8 M240.2 52.2 Q241.0 52.8 240.6 53.8 M240.5 48.3 Q240.6 47.5 241.0 47.4 M243.2 44.2 Q244.2 43.7 244.5 44.3 M242.6 45.8 Q243.7 47.0 244.2 48.1 M236.4 48.0 Q235.4 49.1 236.3 49.1 M238.8 43.7 Q239.6 42.6 240.2 42.8 M239.0 45.6 Q239.4 46.4 239.7 46.9 M243.2 51.5 Q243.6 50.6 244.1 50.9 M245.1 49.5 Q244.2 48.0 243.4 47.6 M242.0 50.4 Q240.5 50.3 240.3 50.6 M241.6 55.0 Q240.0 54.7 239.5 54.5 M246.3 52.6 Q245.9 51.1 246.2 50.2 M237.7 47.7 Q238.0 49.1 238.7 49.0 M238.7 46.1 Q237.6 46.4 237.7 47.4 M246.0 47.6 Q245.6 48.9 244.4 48.0 M236.3 46.7 Q235.1 47.1 236.0 46.8 M241.5 51.2 Q243.0 50.8 244.0 51.7 M238.6 47.1 Q240.1 47.1 240.0 46.7 M245.3 48.1 Q244.7 48.1 243.8 48.3 M239.2 54.0 Q240.3 52.4 240.4 51.9 M247.0 46.3 Q246.2 45.5 245.4 46.6 M239.6 52.8 Q239.5 53.2 239.8 53.8 M241.2 45.8 Q241.3 45.2 240.9 45.3 M237.5 49.2 Q238.3 49.5 237.3 48.9 M233.5 50.5 Q234.7 50.6 233.7 51.3 M235.8 46.2 Q236.2 46.1 237.1 45.9 M235.3 52.5 Q234.3 51.8 235.1 50.9 M244.0 44.2 Q243.8 43.5 244.4 44.4 M236.3 49.1 Q236.3 48.5 235.5 48.7 M241.5 47.4 Q240.7 48.4 241.3 48.8 M246.9 49.3 Q248.5 50.9 248.9 49.9 M242.0 53.1 Q243.5 53.8 242.7 53.3 M242.9 47.6 Q243.2 47.3 242.5 47.6 M242.7 48.9 Q242.3 47.6 241.4 47.7 M242.5 47.3 Q242.2 46.7 242.5 46.7 M244.4 47.3 Q242.9 47.9 242.2 48.2 M233.5 48.2 Q233.7 48.6 233.1 48.7 M241.0 44.6 Q239.8 43.7 239.6 44.3 M243.5 53.1 Q244.0 51.8 244.4 50.9 M244.6 51.6 Q243.7 52.8 243.7 52.4 M246.9 49.5 Q245.5 48.3 246.5 48.7 M241.3 50.1 Q242.8 50.6 243.5 49.8 M238.5 46.4 Q237.7 45.8 237.9 45.5 M245.6 53.1 Q246.1 54.1 246.0 54.9 M236.0 48.0 Q236.2 48.8 236.0 47.9 M243.5 49.0 Q242.0 50.2 242.0 50.8 M233.5 49.8 Q233.9 49.5 233.8 48.6 M242.2 50.1 Q241.8 49.7 242.7 48.9 M240.9 51.1 Q239.8 50.4 239.2 50.4 M244.2 47.1 Q245.6 47.7 246.0 47.6 M242.8 48.0 Q243.3 47.3 243.7 47.8 M242.3 50.4 Q240.8 49.5 239.8 49.3 M238.9 50.6 Q238.8 49.9 239.3 50.4 M242.4 50.6 Q243.0 52.0 243.3 51.8 M241.4 48.4 Q240.0 49.3 239.8 48.3 M245.5 48.2 Q245.0 46.9 244.1 47.8" stroke="#1e2024" stroke-width="0.6" fill="none" stroke-linecap="round"/>
<g fill="#1e2024" opacity="0.8">
<circle cx="237.5" cy="45.5" r="0.36"/>
<circle cx="245.4" cy="46.3" r="0.41"/>
<circle cx="238.2" cy="43.3" r="0.42"/>
<circle cx="247.0" cy="51.0" r="0.70"/>
<circle cx="235.9" cy="47.8" r="0.37"/>
<circle cx="243.7" cy="51.7" r="0.59"/>
<circle cx="240.2" cy="43.3" r="0.42"/>
<circle cx="242.8" cy="50.5" r="0.50"/>
<circle cx="240.3" cy="51.4" r="0.64"/>
<circle cx="242.3" cy="46.4" r="0.78"/>
<circle cx="239.4" cy="46.2" r="0.36"/>
<circle cx="241.8" cy="50.0" r="0.62"/>
<circle cx="238.4" cy="47.8" r="0.72"/>
<circle cx="237.2" cy="47.1" r="0.54"/>
<circle cx="244.5" cy="48.2" r="0.55"/>
<circle cx="239.9" cy="51.9" r="0.40"/>
<circle cx="235.0" cy="50.1" r="0.54"/>
<circle cx="243.4" cy="45.1" r="0.41"/>
<circle cx="245.7" cy="49.2" r="0.73"/>
<circle cx="242.4" cy="48.8" r="0.68"/>
<circle cx="235.0" cy="48.3" r="0.46"/>
<circle cx="243.9" cy="51.0" r="0.71"/>
<circle cx="239.0" cy="46.8" r="0.52"/>
<circle cx="243.0" cy="48.9" r="0.35"/>
<circle cx="240.9" cy="50.6" r="0.36"/>
<circle cx="242.0" cy="50.0" r="0.79"/>
<circle cx="241.3" cy="48.5" r="0.60"/>
</g>
</g>
<g opacity="0.65">
<path d="M270.0 197.9 Q270.0 197.2 268.8 197.5 M268.2 199.3 Q269.1 198.5 269.8 199.0 M263.7 201.8 Q264.3 200.8 264.4 201.5 M267.3 203.7 Q267.9 204.8 267.5 203.9 M269.5 199.2 Q268.2 198.2 268.5 197.7 M273.1 200.2 Q272.1 200.7 271.8 201.6 M272.1 199.8 Q272.5 200.4 273.2 201.5 M264.5 202.5 Q263.9 202.7 263.0 203.6 M266.0 200.7 Q266.6 200.1 265.9 200.0 M269.8 201.6 Q270.9 202.3 269.9 202.9 M263.7 203.8 Q264.1 203.2 263.8 202.9 M276.0 204.0 Q274.6 203.8 275.1 203.5 M271.0 200.7 Q272.5 201.9 272.9 202.8 M271.5 198.3 Q271.5 198.2 272.0 198.0 M273.7 202.2 Q272.9 202.1 273.6 201.4 M270.0 200.9 Q270.3 200.5 269.8 200.4 M267.9 202.4 Q269.1 202.8 268.6 202.7 M265.8 200.9 Q265.4 200.3 266.1 199.9 M262.3 197.6 Q263.6 197.2 263.8 196.8 M260.9 201.0 Q262.3 200.3 261.2 200.2 M268.9 200.9 Q269.8 199.7 270.3 199.4 M275.3 199.6 Q273.9 198.6 274.9 198.9 M269.5 197.9 Q269.5 197.8 268.6 197.5 M271.4 202.6 Q271.8 201.4 272.1 200.5 M272.5 202.2 Q272.4 203.5 272.7 203.9 M268.8 200.2 Q269.2 201.5 270.1 202.4 M262.1 201.5 Q263.1 200.4 264.0 201.3 M261.5 201.8 Q261.4 201.1 261.8 200.1 M271.3 200.6 Q272.7 199.3 273.5 198.8 M272.2 200.4 Q273.5 198.9 272.6 199.7 M264.8 199.3 Q263.3 198.2 263.0 197.2 M268.9 197.6 Q269.6 197.1 268.6 197.6 M271.8 202.1 Q271.7 202.1 270.7 201.2 M267.0 200.7 Q267.1 199.6 266.6 198.8 M265.8 201.5 Q264.9 201.7 265.9 201.6 M269.8 202.0 Q269.0 202.2 269.6 202.4 M269.3 202.1 Q269.0 201.9 268.7 203.0 M264.7 198.6 Q265.1 199.6 264.8 200.0 M270.4 200.6 Q270.8 200.3 269.8 199.2 M268.1 200.0 Q268.8 198.7 268.5 197.7 M268.6 199.7 Q268.9 201.0 268.4 201.0 M266.7 197.6 Q265.6 198.2 264.8 197.3 M269.3 200.7 Q270.6 201.5 271.0 202.1 M267.0 202.5 Q266.0 203.6 266.7 204.3 M269.2 202.9 Q268.4 203.8 269.0 204.9" stroke="#1e2024" stroke-width="0.6" fill="none" stroke-linecap="round"/>
<g fill="#1e2024" opacity="0.8">
<circle cx="269.6" cy="198.5" r="0.56"/>
<circle cx="267.4" cy="203.1" r="0.71"/>
<circle cx="271.2" cy="200.0" r="0.36"/>
<circle cx="269.4" cy="201.5" r="0.36"/>
<circle cx="270.4" cy="200.7" r="0.55"/>
<circle cx="269.6" cy="200.9" r="0.77"/>
<circle cx="263.4" cy="198.2" r="0.53"/>
<circle cx="273.8" cy="199.9" r="0.54"/>
<circle cx="271.6" cy="201.9" r="0.41"/>
<circle cx="262.8" cy="201.6" r="0.71"/>
<circle cx="265.4" cy="199.6" r="0.80"/>
<circle cx="267.2" cy="200.8" r="0.61"/>
<circle cx="269.1" cy="201.9" r="0.60"/>
<circle cx="268.1" cy="200.2" r="0.59"/>
<circle cx="269.0" cy="200.8" r="0.64"/>
</g>
</g>
<g opacity="0.85">
<path d="M275.7 231.3 Q276.2 229.9 276.3 229.6 M275.6 229.5 Q275.4 228.1 274.5 227.9 M278.2 227.9 Q277.3 228.3 278.3 228.5 M267.0 235.3 Q265.5 236.4 265.1 235.6 M273.7 235.5 Q272.7 235.8 273.0 235.5 M275.3 229.1 Q273.9 228.2 274.3 228.0 M274.4 233.8 Q274.2 233.1 274.9 233.6 M271.6 227.6 Q272.8 228.3 272.3 229.4 M280.8 232.0 Q281.7 230.8 281.6 229.8 M272.8 224.3 Q273.1 225.5 272.6 226.0 M272.2 227.6 Q273.2 229.1 273.2 229.4 M284.2 231.5 Q284.7 233.1 285.4 232.6 M271.4 232.9 Q269.9 232.8 269.1 231.9 M277.3 227.7 Q276.5 227.3 277.3 226.4 M271.0 230.9 Q272.2 231.9 273.0 231.4 M272.9 231.2 Q274.2 232.6 273.4 231.9 M277.6 233.5 Q277.9 232.8 276.8 232.6 M272.6 232.8 Q274.0 233.4 274.1 233.7 M276.3 228.5 Q277.5 229.4 278.4 230.0 M275.1 230.5 Q275.5 229.1 274.6 228.4 M279.4 232.2 Q278.0 230.6 277.2 229.7 M276.3 230.1 Q277.5 230.5 276.7 229.9 M275.3 230.9 Q276.4 232.4 276.4 232.4 M279.0 230.3 Q278.5 229.6 279.2 228.8 M287.0 230.7 Q287.1 229.6 287.2 228.6 M286.9 228.6 Q287.5 227.8 287.2 227.0 M277.8 225.2 Q278.7 224.7 278.1 225.4 M286.7 228.9 Q287.7 229.9 288.3 229.3 M276.3 230.2 Q274.7 229.5 274.2 229.9 M282.2 228.5 Q283.6 230.0 284.7 229.7 M277.7 232.0 Q276.7 231.0 277.0 231.9 M269.8 230.2 Q270.7 228.8 271.1 229.7 M278.7 223.8 Q278.6 222.8 279.3 222.4 M281.2 222.5 Q280.9 222.2 281.9 222.7 M279.0 230.9 Q280.3 231.9 279.5 232.6 M284.3 228.9 Q283.8 229.0 283.0 227.9 M284.1 228.6 Q284.2 230.0 284.1 230.8 M277.9 232.1 Q277.3 231.3 277.5 230.7 M274.7 230.4 Q276.0 229.9 275.9 230.1 M281.3 227.4 Q282.6 227.4 282.7 227.5 M274.0 230.3 Q272.5 231.3 271.7 231.2 M276.0 225.1 Q275.5 225.1 275.6 225.8 M282.0 232.3 Q281.2 231.6 281.8 231.6 M277.7 222.5 Q277.5 222.9 277.5 222.9 M275.1 225.9 Q275.2 225.8 276.2 226.3 M285.5 223.6 Q284.8 223.8 285.7 224.6 M280.9 232.1 Q279.5 231.3 278.6 231.7 M279.3 222.5 Q278.2 223.2 278.5 222.4 M286.7 223.3 Q285.8 224.8 285.6 224.8 M278.5 227.7 Q278.3 227.7 277.9 227.1 M273.7 234.6 Q272.1 234.8 272.0 233.7 M273.6 233.8 Q273.6 232.4 274.7 233.0 M280.1 231.2 Q278.6 232.1 278.1 231.2 M267.3 233.1 Q268.3 232.3 267.5 233.3 M270.0 227.2 Q268.7 225.8 269.1 225.6 M283.6 227.6 Q284.5 226.3 285.3 225.3 M280.6 226.6 Q280.1 226.7 281.0 226.2 M281.2 232.6 Q280.4 231.4 279.6 230.4 M275.4 232.3 Q276.2 231.6 276.2 230.9 M276.5 230.0 Q275.7 228.5 276.2 228.6 M279.1 233.2 Q280.5 231.9 281.2 231.8 M279.5 226.5 Q279.6 227.1 280.6 226.7 M280.9 224.7 Q281.3 224.4 281.0 223.4 M278.3 230.5 Q279.1 229.7 278.3 228.8 M282.1 225.7 Q281.4 224.9 281.0 224.8 M280.0 232.7 Q279.2 234.2 280.3 234.3 M277.5 236.5 Q276.8 236.0 275.7 235.8 M273.7 229.5 Q273.7 227.9 273.1 227.0 M275.8 230.1 Q274.3 229.5 273.7 229.7 M268.8 228.4 Q269.3 229.1 270.2 228.9 M279.8 229.3 Q280.5 229.8 279.5 230.5 M282.5 226.4 Q283.2 227.4 282.4 227.5 M267.5 229.3 Q268.5 230.4 268.7 231.2 M275.7 227.1 Q274.2 226.0 273.9 225.1 M280.3 225.7 Q280.7 226.1 281.1 226.0 M285.9 229.6 Q286.7 229.6 286.8 230.0 M276.7 226.8 Q275.3 226.1 275.8 225.4 M276.1 222.5 Q276.1 222.1 276.1 222.5 M277.7 224.7 Q278.2 223.3 277.4 222.8 M274.8 233.8 Q273.3 232.4 272.8 232.8 M274.3 224.6 Q273.7 224.6 273.6 224.6 M284.8 234.5 Q283.8 236.1 284.8 235.0 M282.6 222.5 Q282.4 221.8 281.8 222.8 M278.6 234.0 Q277.5 234.1 278.5 233.2 M279.5 225.7 Q280.8 226.4 280.2 227.3 M277.4 229.5 Q277.4 229.4 276.9 228.6 M274.6 232.0 Q275.7 230.4 276.2 231.2 M285.3 235.0 Q286.0 236.3 285.5 236.0 M283.7 229.5 Q283.2 229.2 282.7 228.2 M284.6 233.5 Q283.9 234.9 283.4 234.3 M273.8 229.3 Q273.4 230.8 274.2 231.5 M287.0 225.2 Q287.2 225.9 286.1 226.4 M269.0 231.3 Q269.5 230.6 268.5 231.5 M280.9 232.3 Q280.4 231.7 281.0 232.8 M274.6 227.0 Q274.8 226.7 274.1 225.9 M279.8 236.5 Q279.8 235.6 280.7 236.7 M274.4 230.1 Q273.4 228.8 273.1 227.9 M276.7 234.0 Q277.9 234.8 277.7 234.6 M272.2 229.0 Q271.7 227.6 271.2 228.6 M281.2 232.4 Q281.6 233.6 280.9 233.1 M272.6 231.7 Q274.1 232.9 274.9 231.8 M284.7 230.6 Q286.0 230.5 286.2 229.4 M268.1 234.5 Q269.2 235.7 270.2 235.1 M280.4 233.0 Q281.0 234.4 281.5 234.8 M277.5 225.6 Q277.7 224.2 278.3 223.6 M283.3 227.1 Q282.7 225.9 282.1 226.2 M278.5 230.4 Q278.5 230.6 278.3 230.0 M276.4 229.2 Q275.8 229.1 276.8 229.4 M281.2 226.8 Q280.4 226.0 281.4 226.5 M282.8 230.1 Q283.4 229.8 282.8 230.2 M280.2 228.4 Q278.7 227.8 278.5 228.3 M279.9 235.4 Q280.6 235.4 280.0 236.5 M278.5 227.2 Q277.7 228.0 277.2 229.1 M273.8 229.6 Q272.9 229.3 273.3 230.3 M280.0 232.3 Q279.1 233.8 278.3 232.8 M268.6 234.1 Q269.9 234.9 271.0 235.9 M275.5 231.5 Q276.9 232.3 275.8 232.6 M273.5 231.8 Q273.0 230.8 271.8 230.3 M279.5 229.0 Q281.0 228.1 280.6 228.8 M279.3 226.1 Q277.9 226.1 277.6 227.0 M278.7 232.6 Q279.9 231.1 279.7 231.8 M278.3 229.7 Q276.9 231.1 276.3 231.6 M280.7 227.6 Q279.9 229.1 280.2 228.5 M276.1 226.5 Q275.4 224.9 275.9 225.9 M278.0 229.2 Q277.2 229.1 278.2 230.2 M274.1 231.2 Q273.9 231.2 274.9 230.5 M279.7 224.1 Q280.7 225.0 280.9 224.6 M271.4 234.2 Q270.0 233.2 270.6 232.6 M278.2 229.9 Q278.4 229.3 279.4 230.2 M280.9 229.3 Q279.6 228.0 279.6 228.5" stroke="#1e2024" stroke-width="0.6" fill="none" stroke-linecap="round"/>
<g fill="#1e2024" opacity="0.8">
<circle cx="276.0" cy="230.9" r="0.38"/>
<circle cx="269.0" cy="234.1" r="0.40"/>
<circle cx="274.9" cy="232.9" r="0.46"/>
<circle cx="273.7" cy="225.4" r="0.62"/>
<circle cx="272.5" cy="232.2" r="0.38"/>
<circle cx="273.8" cy="230.8" r="0.45"/>
<circle cx="276.4" cy="228.7" r="0.53"/>
<circle cx="276.4" cy="230.0" r="0.51"/>
<circle cx="285.0" cy="230.5" r="0.59"/>
<circle cx="284.8" cy="229.0" r="0.58"/>
<circle cx="277.5" cy="231.5" r="0.73"/>
<circle cx="280.4" cy="223.9" r="0.43"/>
<circle cx="282.7" cy="228.8" r="0.72"/>
<circle cx="280.4" cy="227.8" r="0.36"/>
<circle cx="281.0" cy="231.7" r="0.60"/>
<circle cx="283.8" cy="224.8" r="0.41"/>
<circle cx="284.8" cy="224.6" r="0.80"/>
<circle cx="274.3" cy="232.9" r="0.79"/>
<circle cx="271.4" cy="227.6" r="0.38"/>
<circle cx="280.4" cy="232.0" r="0.44"/>
<circle cx="278.7" cy="232.5" r="0.57"/>
<circle cx="278.1" cy="230.3" r="0.73"/>
<circle cx="277.4" cy="235.1" r="0.56"/>
<circle cx="270.4" cy="228.6" r="0.50"/>
<circle cx="269.4" cy="229.4" r="0.66"/>
<circle cx="284.1" cy="229.6" r="0.38"/>
<circle cx="277.6" cy="225.6" r="0.68"/>
<circle cx="283.2" cy="233.5" r="0.56"/>
<circle cx="279.0" cy="226.5" r="0.57"/>
<circle cx="283.7" cy="233.9" r="0.53"/>
<circle cx="274.4" cy="229.4" r="0.63"/>
<circle cx="280.2" cy="231.8" r="0.47"/>
<circle cx="274.9" cy="230.0" r="0.46"/>
<circle cx="280.3" cy="231.9" r="0.46"/>
<circle cx="269.9" cy="233.5" r="0.40"/>
<circle cx="282.0" cy="227.6" r="0.66"/>
<circle cx="280.4" cy="227.4" r="0.49"/>
<circle cx="279.3" cy="234.2" r="0.49"/>
<circle cx="279.4" cy="231.7" r="0.38"/>
<circle cx="274.2" cy="231.4" r="0.51"/>
<circle cx="278.3" cy="232.0" r="0.70"/>
<circle cx="276.3" cy="227.1" r="0.64"/>
<circle cx="279.1" cy="225.2" r="0.49"/>
<circle cx="280.1" cy="229.3" r="0.55"/>
</g>
</g>
<path d="M266 232 L266.6 236 M268.4 232.6 L269 237.4 M271.6 233 L272.2 238 M274 233.4 L274.6 237" stroke="#2a2c30" stroke-width="0.9" opacity="0.45" fill="none"/>
<g opacity="0.45">
<path d="M227.7 236.0 Q226.5 236.7 225.6 236.1 M227.6 235.1 Q227.5 234.9 227.5 234.2 M226.9 232.4 Q226.1 230.9 225.6 230.7 M229.6 232.2 Q228.4 231.4 229.5 230.4 M221.3 234.5 Q220.7 235.2 220.7 235.5 M230.8 231.9 Q229.7 230.5 230.7 230.4 M229.8 236.0 Q230.0 236.7 230.9 236.3 M227.7 232.4 Q228.6 231.2 229.0 231.6 M234.2 232.1 Q234.3 231.1 233.5 231.2 M224.3 233.0 Q225.6 233.0 226.0 232.4 M230.1 233.1 Q229.4 232.9 229.1 233.6 M228.2 232.4 Q227.8 231.3 228.2 232.4 M228.3 235.4 Q227.6 233.9 228.2 233.5 M223.0 233.4 Q222.7 233.3 222.5 233.5 M225.5 233.7 Q224.2 232.4 224.2 232.1 M227.9 231.3 Q228.6 232.9 227.6 231.8 M221.6 234.3 Q222.3 233.8 223.4 232.7 M227.6 232.1 Q228.8 230.6 229.8 231.2 M231.9 232.9 Q230.9 234.4 230.8 233.5 M220.9 233.0 Q219.8 231.8 220.0 231.7 M229.4 234.2 Q230.1 234.8 230.0 234.6 M223.9 233.8 Q223.0 233.7 222.1 234.2" stroke="#1e2024" stroke-width="0.6" fill="none" stroke-linecap="round"/>
<g fill="#1e2024" opacity="0.8">
<circle cx="227.3" cy="235.4" r="0.80"/>
<circle cx="228.9" cy="232.3" r="0.63"/>
<circle cx="229.0" cy="235.4" r="0.51"/>
<circle cx="224.6" cy="233.0" r="0.46"/>
<circle cx="227.8" cy="235.0" r="0.43"/>
<circle cx="227.5" cy="231.7" r="0.41"/>
<circle cx="230.7" cy="232.9" r="0.62"/>
<circle cx="224.3" cy="233.7" r="0.67"/>
</g>
</g>
</svg>
<div class="b" style="left:286.3px;top:28.3px;width:106.4px;height:17.4px;background:#262626;border:1px solid #3d3d3d;border-radius:2.5px">
</div>
<span class="t" style="left:290.60px;top:33.17px;font-size:7px;color:#dcdcdc;transform:scaleX(1.0121);">Material</span>
<svg class="b" style="left:381.9px;top:35.1px;" width="6.6" height="4.6" viewBox="0 0 6.6 4.6">
<path d="M1 1 L3.3 3.6 L5.6 1" fill="none" stroke="#d0d0d0" stroke-width="1.2" stroke-linecap="round" stroke-linejoin="round"/>
</svg>
<div class="b" style="left:676.4px;top:28.3px;width:106.4px;height:17.4px;background:#262626;border:1px solid #3d3d3d;border-radius:2.5px">
</div>
<span class="t" style="left:680.70px;top:33.17px;font-size:7px;color:#dcdcdc;transform:scaleX(1.0121);">Material</span>
<svg class="b" style="left:772px;top:35.1px;" width="6.6" height="4.6" viewBox="0 0 6.6 4.6">
<path d="M1 1 L3.3 3.6 L5.6 1" fill="none" stroke="#d0d0d0" stroke-width="1.2" stroke-linecap="round" stroke-linejoin="round"/>
</svg>
<svg class="b" style="left:360px;top:572px;" width="40" height="40" viewBox="0 0 40 40">
<path d="M15.2 23.5 L26.9 23" stroke="#e06a6a" stroke-width="1.8" stroke-linecap="round"/>
<path d="M15.2 23.5 L11.3 12.6" stroke="#5fcf62" stroke-width="1.8" stroke-linecap="round"/>
<path d="M15.2 23.5 L10.2 30.6" stroke="#7474e8" stroke-width="1.8" stroke-linecap="round"/>
<path d="M8.2 6.6 L9.8 8.6 L11.4 6.6 M9.8 8.6 L9.8 10.4" stroke="#3f9f4a" stroke-width="0.8" fill="none"/>
<path d="M29.8 21.2 L32.6 24.8 M32.6 21.2 L29.8 24.8" stroke="#b84a55" stroke-width="0.8"/>
<path d="M6.4 31.8 L9 31.8 L6.4 35.4 L9 35.4" stroke="#5a5ac8" stroke-width="0.8" fill="none"/>
</svg>
<svg class="b" style="left:755px;top:570px;" width="34" height="34" viewBox="0 0 34 34">
<rect x="8.9" y="12.6" width="2.1" height="14.2" fill="#5fc862"/>
<rect x="11" y="24.7" width="12.6" height="2.1" fill="#e27474"/>
<rect x="8.9" y="24.7" width="2.1" height="2.1" fill="#9aa868"/>
<path d="M8.2 5.2 L9.9 8.4 L11.6 5.2" stroke="#3f9f4a" stroke-width="0.9" fill="none"/>
<path d="M27 23.8 L27 26.6 C27 28.2 30.2 28.2 30.2 26.6 L30.2 23.8" stroke="#c65060" stroke-width="0.9" fill="none"/>
</svg>
<svg class="b" style="left:584px;top:148px;" width="7" height="6" viewBox="0 0 7 6">
<path d="M1.4 4.6 L3.4 1.2 L5.4 4.6 M3.4 3.4 L3.4 4.8" stroke="#6e6e6e" stroke-width="0.7" fill="none"/>
</svg>
<div class="b" style="left:0px;top:0px;width:789px;height:22.7px;background:#333333;">
</div>
<div class="b" style="left:0px;top:0px;width:1.2px;height:22.7px;background:#2a2a2a;">
</div>
<svg class="b" style="left:12.6px;top:5.7px;" width="13" height="11" viewBox="0 0 13 11">
<path transform="scale(0.9)" d="M3.2 2.1 L5.4 2.7 L7.4 0.9 L9 2.1 L9.3 3.4 L10.9 3.1 L11.4 4.7 L9.6 6 L9.3 7.9 L8 9.7 L6.4 8.9 L5.4 7.6 L3.5 8.7 L1.5 8.4 L1.1 6.9 L2.5 5.3 Z" fill="none" stroke="#b4b4b4" stroke-width="0.95" stroke-linejoin="round"/>
</svg>
<svg class="b" style="left:22.2px;top:14.7px;" width="6.4" height="4.1" viewBox="0 0 6.4 4.1">
<path d="M1 1 L3.2 3.1 L5.4 1" fill="none" stroke="#c4c4c4" stroke-width="0.9" stroke-linecap="round" stroke-linejoin="round"/>
</svg>
<div class="b" style="left:31px;top:2.5px;width:1px;height:15.5px;background:#2a2a2a;">
</div>
<span class="t" style="left:35.30px;top:-0.33px;font-size:7px;color:#d2d2d2;transform:scaleX(0.8959);">Size</span>
<span class="t" style="left:86.60px;top:-0.33px;font-size:7px;color:#d2d2d2;">5.25</span>
<div class="b" style="left:35.7px;top:16.25px;width:67.3px;height:1.3px;background:#4a4a4a;">
</div>
<div class="b" style="left:35.7px;top:16.15px;width:13.1px;height:1.5px;background:#c8c8c8;border-radius:1px;">
</div>
<div class="b" style="left:48.6px;top:12.7px;width:8.4px;height:8.4px;border-radius:50%;border:1.5px solid #dadada;background:#333333;box-shadow:0 0 0 1.3px #333333">
</div>
<div class="b" style="left:107px;top:1.5px;width:18px;height:18px;background:#4a4a4a;border-radius:2px;">
</div>
<svg class="b" style="left:112px;top:6.5px;" width="8" height="8" viewBox="0 0 8 8">
<path d="M7.2 0.8 L2.2 3.6 A2.1 2.1 0 1 0 5 6.2 Z" fill="#e0e0e0"/>
</svg>
<span class="t" style="left:128.80px;top:-0.33px;font-size:7px;color:#d2d2d2;transform:scaleX(0.9471);">Flow</span>
<span class="t" style="left:180.10px;top:-0.33px;font-size:7px;color:#d2d2d2;transform:scaleX(0.9588);">100</span>
<div class="b" style="left:129px;top:16.25px;width:63px;height:1.3px;background:#4a4a4a;">
</div>
<div class="b" style="left:129px;top:16.15px;width:55.7px;height:1.5px;background:#c8c8c8;border-radius:1px;">
</div>
<div class="b" style="left:184.5px;top:12.7px;width:8.4px;height:8.4px;border-radius:50%;border:1.5px solid #dadada;background:#333333;box-shadow:0 0 0 1.3px #333333">
</div>
<svg class="b" style="left:203px;top:7px;" width="8" height="8" viewBox="0 0 8 8">
<path d="M7.2 0.8 L2.2 3.6 A2.1 2.1 0 1 0 5 6.2 Z" fill="#e0e0e0"/>
</svg>
<span class="t" style="left:219.70px;top:-0.33px;font-size:7px;color:#d2d2d2;">Stroke opacity</span>
<span class="t" style="left:279.80px;top:-0.33px;font-size:7px;color:#d2d2d2;transform:scaleX(0.9588);">100</span>
<div class="b" style="left:220px;top:16.25px;width:72px;height:1.3px;background:#4a4a4a;">
</div>
<div class="b" style="left:220px;top:16.15px;width:64.7px;height:1.5px;background:#c8c8c8;border-radius:1px;">
</div>
<div class="b" style="left:284.5px;top:12.7px;width:8.4px;height:8.4px;border-radius:50%;border:1.5px solid #dadada;background:#333333;box-shadow:0 0 0 1.3px #333333">
</div>
<span class="t" style="left:297.80px;top:-0.33px;font-size:7px;color:#d2d2d2;transform:scaleX(0.9249);">Spacing</span>
<span class="t" style="left:356.31px;top:-0.33px;font-size:7px;color:#d2d2d2;">4</span>
<div class="b" style="left:297.5px;top:16.25px;width:65.5px;height:1.3px;background:#4a4a4a;">
</div>
<div class="b" style="left:297.5px;top:16.15px;width:1.5px;height:1.5px;background:#c8c8c8;border-radius:1px;">
</div>
<div class="b" style="left:299.5px;top:12.7px;width:8.4px;height:8.4px;border-radius:50%;border:1.5px solid #dadada;background:#333333;box-shadow:0 0 0 1.3px #333333">
</div>
<div class="b" style="left:369.8px;top:2.5px;width:1px;height:15.5px;background:#2a2a2a;">
</div>
<svg class="b" style="left:378px;top:4px;" width="12" height="13" viewBox="0 0 12 13">
<circle cx="8.9" cy="3.4" r="2.1" fill="#e4e4e4"/>
<circle cx="3.6" cy="9.4" r="2.1" fill="#e4e4e4"/>
<circle cx="6.9" cy="5.7" r="0.45" fill="#aaa"/>
<circle cx="5.7" cy="7.1" r="0.45" fill="#aaa"/>
</svg>
<span class="t" style="left:397.80px;top:-0.33px;font-size:7px;color:#5e5e5e;transform:scaleX(0.9546);">Distance</span>
<span class="t" style="left:456.11px;top:-0.33px;font-size:7px;color:#5e5e5e;">8</span>
<div class="b" style="left:398px;top:16.25px;width:65px;height:1.3px;background:#484848;">
</div>
<div class="b" style="left:420.8px;top:12.7px;width:8.4px;height:8.4px;border-radius:50%;border:1.5px solid #6e6e6e;background:#333333;box-shadow:0 0 0 1.3px #333333">
</div>
<div class="b" style="left:466px;top:2.5px;width:1px;height:15.5px;background:#2a2a2a;">
</div>
<svg class="b" style="left:475px;top:6px;" width="10" height="9" viewBox="0 0 10 9">
<path d="M1 8 C5.5 7.6 8 5 8.6 0.6 L8.6 8 Z" fill="#9a9a9a"/>
<path d="M0.6 8 L8.8 8" stroke="#c8c8c8" stroke-width="0.8"/>
<path d="M1 8 C5.5 7.6 8 5 8.6 0.6" stroke="#d0d0d0" stroke-width="0.7" fill="none"/>
</svg>
<svg class="b" style="left:484.5px;top:14.5px;" width="5.8" height="4.2" viewBox="0 0 5.8 4.2">
<path d="M1 1 L2.9 3.2 L4.8 1" fill="none" stroke="#c8c8c8" stroke-width="0.9" stroke-linecap="round" stroke-linejoin="round"/>
</svg>
<div class="b" style="left:494.1px;top:2.5px;width:1px;height:15.5px;background:#2a2a2a;">
</div>
<svg class="b" style="left:502px;top:6px;" width="13" height="9" viewBox="0 0 13 9">
<path d="M5.9 0.8 L5.9 7.4 L0.8 7.4 Z" fill="#e6e6e6"/>
<path d="M7 0.8 L7 7.4 L12 7.4 Z" fill="#bdbdbd"/>
</svg>
<svg class="b" style="left:522px;top:6px;" width="14" height="10" viewBox="0 0 14 10">
<path d="M5.9 0.8 L5.9 7 L1.6 7 Z" fill="#666"/>
<path d="M6.8 0.8 L6.8 5 L9 3 Z" fill="#555"/>
<rect x="7.6" y="4.4" width="3" height="3" transform="rotate(45 9.1 5.9)" fill="none" stroke="#666" stroke-width="0.8"/>
</svg>
<svg class="b" style="left:533px;top:14.6px;" width="5.6" height="3.8" viewBox="0 0 5.6 3.8">
<path d="M1 1 L2.8 2.8 L4.6 1" fill="none" stroke="#555" stroke-width="0.9" stroke-linecap="round" stroke-linejoin="round"/>
</svg>
<svg class="b" style="left:598px;top:4px;" width="13" height="13" viewBox="0 0 13 13">
<rect x="1" y="1" width="11" height="11" fill="none" stroke="#5a5a5a" stroke-width="0.8" stroke-dasharray="1.4 1"/>
<path d="M2.6 6.5 C4.4 3.6 8.6 3.6 10.4 6.5 C8.6 9.4 4.4 9.4 2.6 6.5 Z" fill="none" stroke="#686868" stroke-width="0.9"/>
<path d="M3 3.4 L10 9.8" stroke="#686868" stroke-width="0.9"/>
</svg>
<div class="b" style="left:618.1px;top:2.5px;width:1px;height:15.5px;background:#2a2a2a;">
</div>
<div class="b" style="left:629.6px;top:7px;width:3.4px;height:6.6px;background:#e2e2e2;">
</div>
<div class="b" style="left:634.1px;top:7px;width:3.2px;height:6.6px;background:#e2e2e2;">
</div>
<div class="b" style="left:647.5px;top:2.5px;width:1px;height:15.5px;background:#2a2a2a;">
</div>
<svg class="b" style="left:655px;top:4px;" width="13" height="12" viewBox="0 0 13 12">
<path d="M6.2 0.6 L6.2 11.4" stroke="#dcdcdc" stroke-width="0.9"/>
<path d="M1.4 3.6 L1.4 8.6 L3 8.6 C5.2 8.6 5.2 3.6 3 3.6 Z" fill="none" stroke="#cfcfcf" stroke-width="0.9"/>
<path d="M8 3.6 L8 8.6 L9.8 8.6 C11.6 8.6 11.6 6.2 10.2 6.1 C11.4 6 11.4 3.6 9.8 3.6 Z" fill="#9a9a9a" stroke="#bdbdbd" stroke-width="0.7"/>
</svg>
<svg class="b" style="left:666.2px;top:14.5px;" width="5.8" height="4.2" viewBox="0 0 5.8 4.2">
<path d="M1 1 L2.9 3.2 L4.8 1" fill="none" stroke="#c8c8c8" stroke-width="0.9" stroke-linecap="round" stroke-linejoin="round"/>
</svg>
<svg class="b" style="left:677px;top:5px;" width="12" height="11" viewBox="0 0 12 11">
<path d="M1 2.6 L6 0.8 L11 2.6 L6 4.6 Z" fill="#f0f0f0"/>
<path d="M1 3.3 L5.6 5.2 L5.6 10.2 L1 8 Z" fill="#e0e0e0"/>
<path d="M11 3.3 L6.4 5.2 L6.4 10.2 L11 8 Z" fill="#bcbcbc"/>
</svg>
<svg class="b" style="left:687.3px;top:14.5px;" width="5.8" height="4.2" viewBox="0 0 5.8 4.2">
<path d="M1 1 L2.9 3.2 L4.8 1" fill="none" stroke="#c8c8c8" stroke-width="0.9" stroke-linecap="round" stroke-linejoin="round"/>
</svg>
<svg class="b" style="left:697px;top:5px;" width="13" height="11" viewBox="0 0 13 11">
<path d="M1.2 4.2 C1.2 1.6 4.2 0.6 6 1.2 L9 2.8 L5.4 8.4 L2.4 7 C1.4 6.4 1.2 5.4 1.2 4.2 Z" fill="#c6c6c6"/>
<path d="M6.6 7.6 L9.8 3.6 L11.8 5 L11 6 L12 7 L10.4 8.6 L9.6 8 L8.6 9.6 Z" fill="#a8a8a8"/>
<path d="M2 2.4 L7.4 5.2 M1.6 4.6 L6.4 7" stroke="#333" stroke-width="0.6"/>
</svg>
<svg class="b" style="left:707.8px;top:14.5px;" width="5.8" height="4.2" viewBox="0 0 5.8 4.2">
<path d="M1 1 L2.9 3.2 L4.8 1" fill="none" stroke="#c8c8c8" stroke-width="0.9" stroke-linecap="round" stroke-linejoin="round"/>
</svg>
<div class="b" style="left:716.9px;top:2.5px;width:1px;height:15.5px;background:#2a2a2a;">
</div>
<svg class="b" style="left:725px;top:5px;" width="12" height="11" viewBox="0 0 12 11">
<path d="M7.6 0.8 C9.6 2 11 3.6 10.7 5.6 C10.4 8 8.4 10 5.9 10 C3.8 10 2.2 8.6 1.5 6.6 C3 7.2 4.4 7.2 5.6 6.4 C7 5.4 7.8 3.4 7.6 0.8 Z" fill="#d8d8d8"/>
<path d="M3.3 6.8 L2.7 9 M4.9 6.8 L5 10.4 M6.3 5.8 L8 9.8 M7.2 4.4 L10.6 6.6 M7.6 2.6 L10.4 2.8" stroke="#333" stroke-width="0.75"/>
</svg>
<div class="b" style="left:744.5px;top:-0.5px;width:20.4px;height:21px;background:#4a4a4a;border-radius:3px;">
</div>
<svg class="b" style="left:749px;top:4px;" width="13" height="13" viewBox="0 0 13 13">
<path d="M10.6 1 L11.9 2.3 L5.6 9.2 L4.1 7.7 Z" fill="#e8e8e8"/>
<path d="M3.6 7.6 L5.6 9.6 C5 11 3 11.4 0.8 11.6 C1.6 10.4 2.2 8.6 3.6 7.6 Z" fill="#e8e8e8"/>
</svg>
<svg class="b" style="left:772px;top:6px;" width="12" height="10" viewBox="0 0 12 10">
<path d="M0.8 2.4 L3.4 2.4 L4.2 1 L7.8 1 L8.6 2.4 L11.2 2.4 L11.2 9.2 L0.8 9.2 Z" fill="#d8d8d8"/>
<circle cx="6" cy="5.5" r="2.9" fill="#333"/>
<circle cx="6" cy="5.5" r="1.9" fill="#cfcfcf"/>
<rect x="9.2" y="3.2" width="1.2" height="0.9" fill="#333"/>
</svg>
<div class="b" style="left:788px;top:0px;width:2px;height:621px;background:#2a2a2a;">
</div>
<div class="b" style="left:790px;top:0px;width:211px;height:621px;background:#333333;">
</div>
<div class="b" style="left:790px;top:0px;width:211px;height:20px;background:#2a2a2a;">
</div>
<span class="t" style="left:795.60px;top:5.57px;font-size:7px;color:#e4e4e4;font-weight:bold;transform:scaleX(0.9764);">TEXTURE SET LIST</span>
<svg class="b" style="left:967px;top:5.8px;" width="8" height="8" viewBox="0 0 8 8">
<rect x="1.2" y="1.2" width="5.4" height="5.2" fill="none" stroke="#b4b4b4" stroke-width="0.7"/>
<rect x="1.2" y="3.6" width="2.8" height="2.8" fill="#c4c4c4"/>
</svg>
<svg class="b" style="left:986px;top:5.8px;" width="8" height="8" viewBox="0 0 8 8">
<path d="M1.2 1.2 L6.6 6.6 M6.6 1.2 L1.2 6.6" stroke="#d0d0d0" stroke-width="0.9"/>
</svg>
<svg class="b" style="left:793.5px;top:24px;" width="12" height="10" viewBox="0 0 12 10">
<path d="M1.2 5 C3 1.4 9 1.4 10.8 5 C10.2 6.2 9.4 7 8.6 7.4 M1.2 5 C2.6 7.6 5 8.4 6.4 8.2" fill="none" stroke="#cfcfcf" stroke-width="0.9"/>
<path d="M4.4 3.4 L4.4 6.8 M4.4 3.4 L6.2 3.4 C7.4 3.4 7.4 5.2 6.2 5.2 L4.4 5.2" fill="none" stroke="#cfcfcf" stroke-width="0.8"/>
<path d="M7.4 7.4 L8.8 8.8 L10.2 7.4" fill="none" stroke="#cfcfcf" stroke-width="0.9"/>
</svg>
<svg class="b" style="left:814px;top:24px;" width="12" height="10" viewBox="0 0 12 10">
<path d="M1.2 5 C3 1.6 9 1.6 10.8 5 C9 8.4 3 8.4 1.2 5 Z" fill="none" stroke="#cfcfcf" stroke-width="0.9"/>
<path d="M5.2 3.8 L6.2 3.2 L6.2 7" fill="none" stroke="#cfcfcf" stroke-width="0.8"/>
</svg>
<svg class="b" style="left:984.3px;top:25.2px;" width="10" height="10" viewBox="0 0 10 10">
<path d="M0.8 1.4 L8.6 1.4 M0.8 3.8 L8.6 3.8 M0.8 6.2 L4.4 6.2" stroke="#d6d6d6" stroke-width="1.15"/>
<path d="M5.4 6.6 L7.1 8.4 L8.8 6.6" fill="none" stroke="#d6d6d6" stroke-width="0.9"/>
</svg>
<div class="b" style="left:790px;top:40.4px;width:211px;height:0.9px;background:#262626;">
</div>
<div class="b" style="left:790.3px;top:56.2px;width:210.7px;height:15.8px;background:#222;border:1px solid #3c7fd2;border-radius:1.5px">
</div>
<svg class="b" style="left:792.18px;top:44.5px;" width="9.84" height="8.2" viewBox="0 0 12 10">
<path d="M1.2 5 C3 1.6 9 1.6 10.8 5 C9 8.4 3 8.4 1.2 5 Z" fill="none" stroke="#c4c4c4" stroke-width="1.09756"/>
<circle cx="6" cy="5" r="1.9" fill="none" stroke="#c4c4c4" stroke-width="1.09756"/>
<circle cx="6" cy="5" r="0.7" fill="#c4c4c4"/>
</svg>
<span class="t" style="left:806.20px;top:44.00px;font-size:7.5px;color:#d0d0d0;-webkit-text-stroke:0.25px #d0d0d0;">Bookmark1</span>
<span class="t" style="left:898.80px;top:44.17px;font-size:7px;color:#c8c8c8;transform:scaleX(0.9928);">2048x2048</span>
<span class="t" style="left:950.40px;top:44.17px;font-size:7px;color:#c8c8c8;transform:scaleX(1.0798);">Main shader</span>
<svg class="b" style="left:792.18px;top:59.8px;" width="9.84" height="8.2" viewBox="0 0 12 10">
<path d="M1.2 5 C3 1.6 9 1.6 10.8 5 C9 8.4 3 8.4 1.2 5 Z" fill="none" stroke="#d8d8d8" stroke-width="1.09756"/>
<circle cx="6" cy="5" r="1.9" fill="none" stroke="#d8d8d8" stroke-width="1.09756"/>
<circle cx="6" cy="5" r="0.7" fill="#d8d8d8"/>
</svg>
<span class="t" style="left:806.20px;top:59.30px;font-size:7.5px;color:#f4f4f4;font-weight:bold;transform:scaleX(0.9377);">BookPages</span>
<span class="t" style="left:898.80px;top:59.47px;font-size:7px;color:#e8e8e8;transform:scaleX(0.9928);">2048x2048</span>
<span class="t" style="left:950.40px;top:59.47px;font-size:7px;color:#e8e8e8;transform:scaleX(1.0798);">Main shader</span>
<svg class="b" style="left:792.18px;top:75.6px;" width="9.84" height="8.2" viewBox="0 0 12 10">
<path d="M1.2 5 C3 1.6 9 1.6 10.8 5 C9 8.4 3 8.4 1.2 5 Z" fill="none" stroke="#c4c4c4" stroke-width="1.09756"/>
<circle cx="6" cy="5" r="1.9" fill="none" stroke="#c4c4c4" stroke-width="1.09756"/>
<circle cx="6" cy="5" r="0.7" fill="#c4c4c4"/>
</svg>
<span class="t" style="left:806.20px;top:75.00px;font-size:7.5px;color:#d0d0d0;transform:scaleX(0.9597);-webkit-text-stroke:0.25px #d0d0d0;">Cover</span>
<span class="t" style="left:898.80px;top:75.17px;font-size:7px;color:#c8c8c8;transform:scaleX(0.9928);">2048x2048</span>
<span class="t" style="left:950.40px;top:75.17px;font-size:7px;color:#c8c8c8;transform:scaleX(1.0798);">Main shader</span>
<div class="b" style="left:790px;top:162.8px;width:211px;height:1.4px;background:#222;">
</div>
<div class="b" style="left:790px;top:164px;width:211px;height:18px;background:#333333;">
</div>
<div class="b" style="left:841px;top:164px;width:90px;height:18px;background:#272727;">
</div>
<div class="b" style="left:790px;top:164px;width:51px;height:2px;background:#3b84d8;">
</div>
<span class="t" style="left:795.00px;top:169.87px;font-size:7px;color:#ececec;font-weight:bold;transform:scaleX(0.9729);">LAYERS</span>
<svg class="b" style="left:827.2px;top:171px;" width="8" height="8" viewBox="0 0 8 8">
<path d="M1.2 1.2 L6.8 6.8 M6.8 1.2 L1.2 6.8" stroke="#cfcfcf" stroke-width="0.9"/>
</svg>
<span class="t" style="left:846.00px;top:169.87px;font-size:7px;color:#e4e4e4;font-weight:bold;transform:scaleX(0.9803);">TEXTURE SET SETTINGS</span>
<div class="b" style="left:793px;top:185.5px;width:54.5px;height:17px;background:#2c2c2c;border:1px solid #454545;border-radius:3px">
</div>
<span class="t" style="left:796.80px;top:190.07px;font-size:7px;color:#d8d8d8;transform:scaleX(0.9735);">Base color</span>
<svg class="b" style="left:837px;top:192px;" width="6.6" height="4.6" viewBox="0 0 6.6 4.6">
<path d="M1 1 L3.3 3.6 L5.6 1" fill="none" stroke="#cfcfcf" stroke-width="1.1" stroke-linecap="round" stroke-linejoin="round"/>
</svg>
<svg class="b" style="left:874px;top:188px;" width="12" height="12" viewBox="0 0 12 12">
<path d="M1 10.6 L7.4 4.2" stroke="#d6d6d6" stroke-width="1.3"/>
<path d="M8.6 0.6 L8.6 3 M7 1 L8 2.4 M10.6 1.4 L9.4 2.6 M11.2 3.4 L9.6 3.4 M10.4 5.2 L9.4 4.2" stroke="#d6d6d6" stroke-width="0.7"/>
<path d="M7.4 8.6 L8.8 10 L10.2 8.6" fill="none" stroke="#d6d6d6" stroke-width="0.9"/>
</svg>
<svg class="b" style="left:892.6px;top:188.8px;" width="12" height="11" viewBox="0 0 12 11">
<rect x="0.4" y="0.4" width="10.4" height="9.8" fill="#dadada"/>
<circle cx="5.6" cy="5.2" r="3" fill="#333"/>
<path d="M5.6 5.2 L11 5.2 L11 10.4 L5.6 10.4 Z" fill="#333"/>
<path d="M6.9 7 L8.3 8.4 L9.8 6.9" fill="none" stroke="#dcdcdc" stroke-width="0.95"/>
<path d="M8.6 2.2 A3 3 0 0 1 8.6 5.4" fill="none" stroke="#dadada" stroke-width="0"/>
</svg>
<svg class="b" style="left:910px;top:188px;" width="13" height="12" viewBox="0 0 13 12">
<path d="M10.6 0.8 L11.9 2.1 L5.6 8.8 L4.1 7.3 Z" fill="#dcdcdc"/>
<path d="M3.6 7.2 L5.6 9.2 C5 10.6 3 11 0.8 11.2 C1.6 10 2.2 8.2 3.6 7.2 Z" fill="#dcdcdc"/>
</svg>
<svg class="b" style="left:928.5px;top:188px;" width="13" height="12" viewBox="0 0 13 12">
<path d="M5 2.6 L9.6 7 L5.4 10.4 L1.2 6.4 Z" fill="none" stroke="#dcdcdc" stroke-width="0.9"/>
<path d="M1.6 6.4 L9.2 6.9 L5.4 10.2 Z" fill="#dcdcdc"/>
<path d="M5 2.6 L5 0.6" stroke="#dcdcdc" stroke-width="0.8"/>
<path d="M10.8 8.2 C11.6 9.4 11.8 10.4 10.8 10.6 C9.8 10.4 10 9.4 10.8 8.2 Z" fill="#dcdcdc"/>
</svg>
<svg class="b" style="left:946.5px;top:188.5px;" width="12" height="11" viewBox="0 0 12 11">
<path d="M6 0.6 A4.9 4.9 0 1 0 6.6 10.2 C3.4 8 3.6 3 6 0.6 Z" fill="#c8c8c8"/>
<path d="M6.4 0.6 C9.4 0.8 11.2 3.4 10.8 6 L5.4 6 C5 4 5.4 2 6.4 0.6 Z" fill="#e4e4e4"/>
<path d="M7 7.2 L8.4 8.6 L9.8 7.2" fill="none" stroke="#dcdcdc" stroke-width="0.9"/>
</svg>
<svg class="b" style="left:965px;top:189px;" width="12" height="10" viewBox="0 0 12 10">
<path d="M0.6 1 L4.4 1 L5.6 2.4 L11 2.4 L11 9.2 L0.6 9.2 Z" fill="#d8d8d8"/>
</svg>
<svg class="b" style="left:984px;top:188.6px;" width="11" height="12" viewBox="0 0 11 12">
<rect x="0.8" y="1.7" width="9" height="1.1" fill="#d0d0d0"/>
<rect x="3.6" y="0.5" width="3.4" height="1.3" fill="#d0d0d0"/>
<rect x="1.6" y="3.4" width="7.4" height="7.4" rx="0.6" fill="#c4c4c4"/>
<path d="M3.5 4.2 L3.5 10 M5.3 4.2 L5.3 10 M7.1 4.2 L7.1 10" stroke="#4a4a4a" stroke-width="0.7"/>
</svg>
<div class="b" style="left:790px;top:207.8px;width:204px;height:1px;background:#272727;">
</div>
<div class="b" style="left:790px;top:238.4px;width:204px;height:1px;background:#272727;">
</div>
<div class="b" style="left:790px;top:269px;width:204px;height:1px;background:#272727;">
</div>
<div class="b" style="left:790px;top:299.6px;width:204px;height:1px;background:#272727;">
</div>
<div class="b" style="left:993.8px;top:208.6px;width:6.4px;height:122px;background:#292929;">
</div>
<div class="b" style="left:993.8px;top:208.6px;width:6.4px;height:76.6px;background:#454545;">
</div>
<svg class="b" style="left:793px;top:216.9px;" width="12" height="10" viewBox="0 0 12 10">
<path d="M1.2 5 C3 1.6 9 1.6 10.8 5 C9 8.4 3 8.4 1.2 5 Z" fill="none" stroke="#d0d0d0" stroke-width="0.9"/>
<circle cx="6" cy="5" r="1.9" fill="none" stroke="#d0d0d0" stroke-width="0.9"/>
<circle cx="6" cy="5" r="0.7" fill="#d0d0d0"/>
</svg>
<svg class="b" style="left:809px;top:213.9px;" width="14.8" height="14.8" viewBox="0 0 14.8 14.8">
<defs>
<pattern id="ck213" width="3" height="3" patternUnits="userSpaceOnUse">
<rect width="3" height="3" fill="#fbfbfb"/>
<rect width="1.5" height="1.5" fill="#c2c2c2"/>
<rect x="1.5" y="1.5" width="1.5" height="1.5" fill="#c2c2c2"/>
</pattern>
</defs>
<rect width="14.8" height="14.8" fill="url(#ck213)"/>
</svg>
<div class="b" style="left:809px;top:233.1px;width:14.6px;height:2.6px;background:#4c4c4c;">
</div>
<span class="t" style="left:828.00px;top:219.10px;font-size:7.5px;color:#bcbcbc;transform:scaleX(0.9594);">Layer 1</span>
<div class="b" style="left:944px;top:216.2px;width:15px;height:15px;border:1px dotted #525252">
</div>
<span class="t" style="left:964.50px;top:212.77px;font-size:7px;color:#dedede;transform:scaleX(0.9818);">Norm</span>
<svg class="b" style="left:983px;top:215.8px;" width="5" height="3.7" viewBox="0 0 5 3.7">
<path d="M1 1 L2.5 2.7 L4 1" fill="none" stroke="#b4b4b4" stroke-width="0.8" stroke-linecap="round" stroke-linejoin="round"/>
</svg>
<span class="t" style="left:967.50px;top:226.77px;font-size:7px;color:#dedede;transform:scaleX(0.9246);">100</span>
<svg class="b" style="left:983px;top:230px;" width="5" height="3.7" viewBox="0 0 5 3.7">
<path d="M1 1 L2.5 2.7 L4 1" fill="none" stroke="#b4b4b4" stroke-width="0.8" stroke-linecap="round" stroke-linejoin="round"/>
</svg>
<svg class="b" style="left:793px;top:247.5px;" width="12" height="10" viewBox="0 0 12 10">
<path d="M1.2 5 C3 1.6 9 1.6 10.8 5 C9 8.4 3 8.4 1.2 5 Z" fill="none" stroke="#d0d0d0" stroke-width="0.9"/>
<circle cx="6" cy="5" r="1.9" fill="none" stroke="#d0d0d0" stroke-width="0.9"/>
<circle cx="6" cy="5" r="0.7" fill="#d0d0d0"/>
</svg>
<div class="b" style="left:822px;top:244.5px;width:14.6px;height:14.6px;background:#e2e2e2;">
</div>
<svg class="b" style="left:822px;top:244.5px;" width="15" height="15" viewBox="0 0 15 15">
<path d="M2.2 1 L4.8 1 L3.8 6.4 L2 6.4 Z" fill="#f4f4f4"/>
<path d="M0.5 0.5 L14.1 0.5 L14.1 14.1 L0.5 14.1 Z" fill="none" stroke="#f0f0f0" stroke-width="0.6"/>
</svg>
<svg class="b" style="left:807.6px;top:247.9px;" width="11" height="9" viewBox="0 0 11 9">
<path d="M0.6 8.2 L0.6 0.8 L3.8 0.8 L4.8 2 L8.6 2 L8.6 3.4" fill="none" stroke="#d8d8d8" stroke-width="0.9"/>
<path d="M2.2 3.6 L10.4 3.6 L9 8.2 L0.6 8.2 Z" fill="#d8d8d8"/>
</svg>
<div class="b" style="left:822px;top:263.7px;width:14.6px;height:2.6px;background:#4c4c4c;">
</div>
<span class="t" style="left:841.20px;top:249.70px;font-size:7.5px;color:#bcbcbc;transform:scaleX(0.9269);">Leather Calf Grain</span>
<div class="b" style="left:944px;top:246.8px;width:15px;height:15px;border:1px dotted #525252">
</div>
<span class="t" style="left:964.50px;top:243.37px;font-size:7px;color:#dedede;transform:scaleX(0.9818);">Norm</span>
<svg class="b" style="left:983px;top:246.4px;" width="5" height="3.7" viewBox="0 0 5 3.7">
<path d="M1 1 L2.5 2.7 L4 1" fill="none" stroke="#b4b4b4" stroke-width="0.8" stroke-linecap="round" stroke-linejoin="round"/>
</svg>
<span class="t" style="left:967.50px;top:257.37px;font-size:7px;color:#dedede;transform:scaleX(0.9246);">100</span>
<svg class="b" style="left:983px;top:260.6px;" width="5" height="3.7" viewBox="0 0 5 3.7">
<path d="M1 1 L2.5 2.7 L4 1" fill="none" stroke="#b4b4b4" stroke-width="0.8" stroke-linecap="round" stroke-linejoin="round"/>
</svg>
<svg class="b" style="left:793px;top:278.1px;" width="12" height="10" viewBox="0 0 12 10">
<path d="M1.2 5 C3 1.6 9 1.6 10.8 5 C9 8.4 3 8.4 1.2 5 Z" fill="none" stroke="#d0d0d0" stroke-width="0.9"/>
<circle cx="6" cy="5" r="1.9" fill="none" stroke="#d0d0d0" stroke-width="0.9"/>
<circle cx="6" cy="5" r="0.7" fill="#d0d0d0"/>
</svg>
<svg class="b" style="left:822px;top:275.1px;" width="14.8" height="14.8" viewBox="0 0 14.8 14.8">
<defs>
<pattern id="ck275" width="3" height="3" patternUnits="userSpaceOnUse">
<rect width="3" height="3" fill="#fbfbfb"/>
<rect width="1.5" height="1.5" fill="#c2c2c2"/>
<rect x="1.5" y="1.5" width="1.5" height="1.5" fill="#c2c2c2"/>
</pattern>
</defs>
<rect width="14.8" height="14.8" fill="url(#ck275)"/>
</svg>
<div class="b" style="left:822px;top:294.3px;width:14.6px;height:2.6px;background:#4c4c4c;">
</div>
<span class="t" style="left:841.40px;top:280.30px;font-size:7.5px;color:#bcbcbc;transform:scaleX(0.9130);">Roughness Moisture</span>
<div class="b" style="left:944px;top:277.4px;width:15px;height:15px;border:1px dotted #525252">
</div>
<span class="t" style="left:964.50px;top:273.97px;font-size:7px;color:#dedede;transform:scaleX(0.9818);">Norm</span>
<svg class="b" style="left:983px;top:277px;" width="5" height="3.7" viewBox="0 0 5 3.7">
<path d="M1 1 L2.5 2.7 L4 1" fill="none" stroke="#b4b4b4" stroke-width="0.8" stroke-linecap="round" stroke-linejoin="round"/>
</svg>
<span class="t" style="left:967.50px;top:287.97px;font-size:7px;color:#dedede;transform:scaleX(0.9246);">100</span>
<svg class="b" style="left:983px;top:291.2px;" width="5" height="3.7" viewBox="0 0 5 3.7">
<path d="M1 1 L2.5 2.7 L4 1" fill="none" stroke="#b4b4b4" stroke-width="0.8" stroke-linecap="round" stroke-linejoin="round"/>
</svg>
<svg class="b" style="left:793px;top:308.7px;" width="12" height="10" viewBox="0 0 12 10">
<path d="M1.2 5 C3 1.6 9 1.6 10.8 5 C9 8.4 3 8.4 1.2 5 Z" fill="none" stroke="#d0d0d0" stroke-width="0.9"/>
<circle cx="6" cy="5" r="1.9" fill="none" stroke="#d0d0d0" stroke-width="0.9"/>
<circle cx="6" cy="5" r="0.7" fill="#d0d0d0"/>
</svg>
<div class="b" style="left:822px;top:305.7px;width:14.6px;height:14.6px;background:#dedede;">
</div>
<svg class="b" style="left:822px;top:305.7px;" width="15" height="15" viewBox="0 0 15 15">
<path d="M9 8.4 L11 12.4 L8.2 12.6 Z" fill="#c4c4c4"/>
</svg>
<div class="b" style="left:841.6px;top:305.7px;width:14.6px;height:14.6px;background:#fdfdfd;">
</div>
<svg class="b" style="left:841.6px;top:305.7px;" width="15" height="15" viewBox="0 0 15 15">
<path d="M2.6 1.4 L4.6 1 L4.2 4 L3.8 9.6 L1.8 9.6 L2.2 4.6 Z" fill="#2e2e2e"/>
<path d="M5.4 1.2 L6.6 1 L6.4 3.2 L5.2 3.4 Z" fill="#555"/>
<path d="M0.8 2.4 L1.8 2.2 L1.6 5 L0.8 5 Z" fill="#999"/>
</svg>
<div class="b" style="left:822px;top:324.3px;width:14.6px;height:3.4px;background:#4c4c4c;">
</div>
<div class="b" style="left:841.6px;top:324.3px;width:14.6px;height:3.4px;background:#e2771f;">
</div>
<span class="t" style="left:861.00px;top:310.20px;font-size:7.5px;color:#bcbcbc;transform:scaleX(0.9431);">Dirt</span>
<div class="b" style="left:944px;top:308px;width:15px;height:15px;border:1px dotted #525252">
</div>
<span class="t" style="left:970.70px;top:304.57px;font-size:7px;color:#dedede;transform:scaleX(0.9397);">Mul</span>
<svg class="b" style="left:983px;top:307.6px;" width="5" height="3.7" viewBox="0 0 5 3.7">
<path d="M1 1 L2.5 2.7 L4 1" fill="none" stroke="#b4b4b4" stroke-width="0.8" stroke-linecap="round" stroke-linejoin="round"/>
</svg>
<span class="t" style="left:967.50px;top:318.57px;font-size:7px;color:#dedede;transform:scaleX(0.9246);">100</span>
<svg class="b" style="left:983px;top:321.8px;" width="5" height="3.7" viewBox="0 0 5 3.7">
<path d="M1 1 L2.5 2.7 L4 1" fill="none" stroke="#b4b4b4" stroke-width="0.8" stroke-linecap="round" stroke-linejoin="round"/>
</svg>
<div class="b" style="left:790px;top:330.6px;width:211px;height:1.6px;background:#222;">
</div>
<div class="b" style="left:790px;top:332px;width:211px;height:21px;background:#2a2a2a;">
</div>
<span class="t" style="left:795.00px;top:338.57px;font-size:7px;color:#e4e4e4;font-weight:bold;transform:scaleX(1.0247);">PROPERTIES - PAINT</span>
<svg class="b" style="left:967px;top:338.4px;" width="8" height="8" viewBox="0 0 8 8">
<rect x="1.2" y="1.2" width="5.4" height="5.2" fill="none" stroke="#b4b4b4" stroke-width="0.7"/>
<rect x="1.2" y="3.6" width="2.8" height="2.8" fill="#c4c4c4"/>
</svg>
<svg class="b" style="left:986px;top:338.4px;" width="8" height="8" viewBox="0 0 8 8">
<path d="M1.2 1.2 L6.6 6.6 M6.6 1.2 L1.2 6.6" stroke="#d0d0d0" stroke-width="0.9"/>
</svg>
<div class="b" style="left:790px;top:353px;width:211px;height:85.4px;background:#1b1b1b;">
</div>
<svg class="b" style="left:790px;top:353px;" width="211" height="85.4" viewBox="0 0 211 85.4">
<defs>
<linearGradient id="sph" x1="0.35" y1="0" x2="0.5" y2="1">
<stop offset="0" stop-color="#30333a"/>
<stop offset="0.25" stop-color="#2a2c31"/>
<stop offset="0.5" stop-color="#1f1f20"/>
<stop offset="0.7" stop-color="#171512"/>
<stop offset="1" stop-color="#1b150d"/>
</linearGradient>
<radialGradient id="sphH" cx="0.5" cy="0.5" r="0.5">
<stop offset="0" stop-color="#6e6a64" stop-opacity="1"/>
<stop offset="0.25" stop-color="#5e5b56" stop-opacity="0.85"/>
<stop offset="0.6" stop-color="#45443f" stop-opacity="0.4"/>
<stop offset="1" stop-color="#3a3a3a" stop-opacity="0"/>
</radialGradient>
<radialGradient id="sphB" cx="0.42" cy="0.55" r="0.6">
<stop offset="0" stop-color="#141414" stop-opacity="0.55"/>
<stop offset="0.5" stop-color="#141414" stop-opacity="0.25"/>
<stop offset="0.82" stop-color="#2a2c30" stop-opacity="0"/>
<stop offset="1" stop-color="#44474e" stop-opacity="0.5"/>
</radialGradient>
<clipPath id="sphC">
<circle cx="158.7" cy="41.1" r="37.6"/>
</clipPath>
<filter id="bl">
<feGaussianBlur stdDeviation="0.35"/>
</filter>
</defs>
<path d="M11.46 42.57 C11.28 41.88 13.03 39.52 14.06 37.98 C15.08 36.44 16.53 34.40 17.88 32.93 C19.22 31.46 21.12 29.59 22.46 28.80 C23.81 28.02 25.02 27.84 26.29 28.04 C27.56 28.24 28.83 28.51 30.42 30.03 C32.01 31.54 34.17 34.36 36.23 37.52 C38.28 40.68 41.50 46.99 43.26 49.75 C45.02 52.52 45.91 55.41 47.24 54.80 C48.56 54.19 49.90 50.16 51.52 45.93 C53.13 41.70 55.61 33.04 57.33 28.35 C59.04 23.65 60.83 19.04 62.22 16.57 C63.61 14.10 64.87 13.39 66.04 12.90 C67.22 12.41 68.41 13.12 69.56 13.51 C70.71 13.91 72.06 14.52 73.23 15.35 C74.40 16.18 75.72 16.95 76.90 18.71 C78.07 20.47 79.25 22.74 80.57 26.36 C81.89 29.98 83.69 36.55 85.16 41.34 C86.62 46.14 88.32 52.22 89.74 56.33 C91.16 60.44 92.75 64.73 94.02 67.03 C95.30 69.33 96.91 69.67 97.69 70.70 C98.48 71.73 99.16 72.57 98.92 73.45 C98.67 74.33 97.19 75.91 96.17 76.20 C95.14 76.50 93.52 75.19 92.50 75.29 C91.47 75.39 90.87 76.57 89.74 76.82 C88.62 77.06 86.78 77.11 85.46 76.82 C84.14 76.52 82.76 76.50 81.49 74.98 C80.21 73.46 78.76 70.76 77.51 67.34 C76.26 63.91 74.91 58.42 73.69 53.57 C72.46 48.73 70.82 40.88 69.87 37.06 C68.91 33.24 68.65 29.04 67.72 29.72 C66.80 30.41 65.47 37.57 64.06 41.34 C62.64 45.11 60.81 50.09 58.86 53.27 C56.90 56.45 53.58 59.85 51.82 61.22 C50.06 62.59 49.12 61.64 47.85 61.83 C46.57 62.03 45.24 62.91 43.87 62.44 C42.50 61.98 40.85 60.96 39.28 58.93 C37.72 56.90 35.75 52.88 34.09 49.75 C32.42 46.62 30.31 41.92 28.89 39.35 C27.47 36.79 26.49 34.31 25.22 33.70 C23.94 33.09 22.55 34.16 20.94 35.53 C19.32 36.90 16.64 41.13 15.13 42.26 C13.61 43.39 11.63 43.25 11.46 42.57 Z" fill="#fbfbfb" filter="url(#bl)"/>
<polyline points="18.64,34.46 24.76,30.94 29.35,35.23 36.23,47.46 42.34,57.40 46.17,59.39" fill="none" stroke="#d6d6d6" stroke-width="0.7" opacity="0.8" stroke-linecap="round" stroke-linejoin="round"/>
<polyline points="48.46,58.16 54.88,45.93 60.69,29.87 65.58,18.41" fill="none" stroke="#e0e0e0" stroke-width="0.6" opacity="0.7" stroke-linecap="round" stroke-linejoin="round"/>
<polyline points="68.64,17.64 71.39,29.11 76.29,47.46 81.79,65.81 85.92,74.22" fill="none" stroke="#d2d2d2" stroke-width="0.7" opacity="0.8" stroke-linecap="round" stroke-linejoin="round"/>
<polyline points="72.92,19.94 77.51,35.23 83.63,55.10 89.44,70.39 91.58,74.22" fill="none" stroke="#dcdcdc" stroke-width="0.6" opacity="0.7" stroke-linecap="round" stroke-linejoin="round"/>
<circle cx="158.7" cy="41.1" r="37.7" fill="url(#sph)"/>
<g clip-path="url(#sphC)">
<circle cx="158.7" cy="41.1" r="37.7" fill="url(#sphB)"/>
<ellipse cx="182" cy="36" rx="27" ry="25" fill="url(#sphH)"/>
</g>
</svg>
<div class="b" style="left:790px;top:438.4px;width:211px;height:22px;background:#333333;">
</div>
<div class="b" style="left:812px;top:440px;width:66.6px;height:19.8px;background:#2a2a2a;">
</div>
<div class="b" style="left:790px;top:438.5px;width:22px;height:1.7px;background:#3b84d8;">
</div>
<div class="b" style="left:812px;top:438.4px;width:189px;height:1.7px;background:#262626;">
</div>
<svg class="b" style="left:796px;top:444px;" width="12" height="12" viewBox="0 0 12 12">
<path d="M1 8 C3.6 5.6 6.6 3.2 10.3 1.5 C8.4 3.8 6.6 6.4 5.4 9.4" fill="none" stroke="#c2c2c2" stroke-width="0.9" stroke-linejoin="round" stroke-linecap="round"/>
<path d="M2 8.8 C4.2 6.6 6.2 5 8.6 3.4" stroke="#b4b4b4" stroke-width="0.7" fill="none"/>
<path d="M5.2 7.4 L8.6 7.1 M7.3 7 L7.1 11.2" stroke="#c2c2c2" stroke-width="0.85" fill="none" stroke-linecap="round"/>
</svg>
<svg class="b" style="left:818px;top:444px;" width="12" height="12" viewBox="0 0 12 12">
<defs>
<pattern id="gr" width="2" height="2" patternUnits="userSpaceOnUse">
<rect width="1" height="1" fill="#3c3c3c"/>
<rect x="1" y="1" width="1" height="1" fill="#3c3c3c"/>
</pattern>
<radialGradient id="grm" cx="0.5" cy="0.5" r="0.5">
<stop offset="0" stop-color="#fff" stop-opacity="1"/>
<stop offset="0.6" stop-color="#fff" stop-opacity="0.85"/>
<stop offset="1" stop-color="#fff" stop-opacity="0.1"/>
</radialGradient>
<mask id="grk">
<circle cx="5.7" cy="5.8" r="4.8" fill="url(#grm)"/>
</mask>
</defs>
<circle cx="5.7" cy="5.8" r="5.3" fill="#d2d2d2"/>
<rect x="0" y="0" width="12" height="12" fill="url(#gr)" mask="url(#grk)"/>
</svg>
<svg class="b" style="left:839px;top:443px;" width="13" height="13" viewBox="0 0 13 13">
<rect x="1.5" y="1.6" width="10" height="10" fill="none" stroke="#9c9c9c" stroke-width="1"/>
<circle cx="6.5" cy="6.7" r="2.5" fill="#d8d8d8"/>
</svg>
<svg class="b" style="left:861.6px;top:443.6px;" width="12" height="12" viewBox="0 0 12 12">
<circle cx="5.8" cy="6.3" r="4.9" fill="#bebebe"/>
<circle cx="7.1" cy="4.9" r="4.4" fill="#2a2a2a"/>
<circle cx="7.1" cy="4.9" r="3.7" fill="#d6d6d6"/>
</svg>
<div class="b" style="left:993.8px;top:461px;width:6.4px;height:160px;background:#292929;">
</div>
<div class="b" style="left:993.8px;top:461.4px;width:6.4px;height:21.2px;background:#454545;">
</div>
<span class="t" style="left:801.50px;top:476.57px;font-size:7px;color:#ececec;font-weight:bold;transform:scaleX(0.9883);">BRUSH</span>
<svg class="b" style="left:968.4px;top:476.6px;" width="10" height="10" viewBox="0 0 10 10">
<path d="M0.8 1.4 L8.6 1.4 M0.8 3.8 L8.6 3.8 M0.8 6.2 L4.4 6.2" stroke="#d6d6d6" stroke-width="1.15"/>
<path d="M5.4 6.6 L7.1 8.4 L8.8 6.6" fill="none" stroke="#d6d6d6" stroke-width="0.9"/>
</svg>
<span class="t" style="left:801.60px;top:497.27px;font-size:7.3px;color:#d8d8d8;transform:scaleX(0.8732);">Size</span>
<span class="t" style="left:815.50px;top:514.17px;font-size:7.3px;color:#d8d8d8;transform:scaleX(0.8732);">Size</span>
<span class="t" style="left:942.80px;top:514.97px;font-size:7px;color:#d8d8d8;transform:scaleX(1.0568);">5.25</span>
<div class="b" style="left:815.5px;top:530.05px;width:144.1px;height:1.3px;background:#4c4c4c;">
</div>
<div class="b" style="left:815.5px;top:529.95px;width:28.8px;height:1.5px;background:#c8c8c8;border-radius:1px;">
</div>
<div class="b" style="left:844.1px;top:526.5px;width:8.4px;height:8.4px;border-radius:50%;border:1.5px solid #dadada;background:#333333;box-shadow:0 0 0 1.3px #333333">
</div>
<div class="b" style="left:964px;top:515.2px;width:18px;height:18.2px;background:#4a4a4a;border-radius:2px;">
</div>
<svg class="b" style="left:969px;top:520.4px;" width="8" height="8" viewBox="0 0 8 8">
<path d="M7.2 0.8 L2.2 3.6 A2.1 2.1 0 1 0 5 6.2 Z" fill="#e0e0e0"/>
</svg>
<span class="t" style="left:815.50px;top:540.67px;font-size:7.3px;color:#d8d8d8;transform:scaleX(0.9187);">Minimum Size (%)</span>
<span class="t" style="left:953.11px;top:541.37px;font-size:7px;color:#d8d8d8;">0</span>
<div class="b" style="left:815.5px;top:556.65px;width:144.1px;height:1.3px;background:#4c4c4c;">
</div>
<div class="b" style="left:816.5px;top:553.1px;width:8.4px;height:8.4px;border-radius:50%;border:1.5px solid #dadada;background:#333333;box-shadow:0 0 0 1.3px #333333">
</div>
<span class="t" style="left:801.60px;top:570.07px;font-size:7.3px;color:#d8d8d8;transform:scaleX(0.9213);">Flow</span>
<span class="t" style="left:815.50px;top:586.67px;font-size:7.3px;color:#d8d8d8;transform:scaleX(0.9213);">Flow</span>
<span class="t" style="left:946.00px;top:587.47px;font-size:7px;color:#d8d8d8;transform:scaleX(0.9588);">100</span>
<div class="b" style="left:815.5px;top:602.55px;width:144.1px;height:1.3px;background:#4c4c4c;">
</div>
<div class="b" style="left:815.5px;top:602.45px;width:135px;height:1.5px;background:#c8c8c8;border-radius:1px;">
</div>
<div class="b" style="left:950.3px;top:599px;width:8.4px;height:8.4px;border-radius:50%;border:1.5px solid #dadada;background:#333333;box-shadow:0 0 0 1.3px #333333">
</div>
<svg class="b" style="left:968px;top:593px;" width="8" height="8" viewBox="0 0 8 8">
<path d="M7.2 0.8 L2.2 3.6 A2.1 2.1 0 1 0 5 6.2 Z" fill="#e0e0e0"/>
</svg>
<span class="t" style="left:815.50px;top:613.67px;font-size:7.3px;color:#5a5a5a;transform:scaleX(0.9267);">Minimum Flow (%)</span>
<span class="t" style="left:953.11px;top:614.17px;font-size:7px;color:#5a5a5a;">0</span>
<div class="b" style="left:1001px;top:0px;width:23px;height:621px;background:#333333;">
</div>
<div class="b" style="left:1000.7px;top:0px;width:1.5px;height:621px;background:#2b2b2b;">
</div>
<div class="b" style="left:1000px;top:57px;width:1px;height:14.2px;background:#3c7fd2;">
</div>
<svg class="b" style="left:1005px;top:9px;" width="16" height="4" viewBox="0 0 16 4">
<path d="M1.5 2 L14 2" stroke="#444444" stroke-width="1.2" stroke-dasharray="1.2 1.2"/>
</svg>
<svg class="b" style="left:1006px;top:26px;" width="13" height="12" viewBox="0 0 13 12">
<rect x="0.8" y="0.8" width="11.4" height="7.8" rx="0.8" fill="#dcdcdc"/>
<circle cx="6.5" cy="4.7" r="2.4" fill="#333333"/>
<circle cx="6.5" cy="4.7" r="1.1" fill="#dcdcdc"/>
<path d="M3.8 10.4 L9.2 10.4" stroke="#dcdcdc" stroke-width="1.1"/>
</svg>
<svg class="b" style="left:1006.6px;top:46.8px;" width="12" height="12" viewBox="0 0 12 12">
<circle cx="6" cy="6" r="5.3" fill="#d6d6d6"/>
<path d="M2 5 C3 2.6 5.6 1.8 7.4 2.6 C5.4 3 4 4.4 3.6 6.4 C3.4 8 4 9 5 9.8" fill="none" stroke="#333333" stroke-width="0.9"/>
<circle cx="8" cy="7.6" r="2.1" fill="#333333"/>
<circle cx="8" cy="7.6" r="1" fill="#d6d6d6"/>
</svg>
<svg class="b" style="left:1006.4px;top:67.2px;" width="13" height="13" viewBox="0 0 13 13">
<path d="M2.2 8.6 A4.8 4.8 0 1 0 2 4.6" fill="none" stroke="#d2d2d2" stroke-width="1"/>
<path d="M0.6 7.4 L2.2 9.4 L3.8 7.4" fill="none" stroke="#d2d2d2" stroke-width="0.9"/>
<path d="M6.6 3.4 L6.6 6.4 L8.6 7.8" fill="none" stroke="#d2d2d2" stroke-width="1"/>
</svg>
<svg class="b" style="left:1007px;top:89.2px;" width="11" height="11" viewBox="0 0 11 11">
<rect x="0.8" y="0.8" width="9.4" height="9.4" rx="0.8" fill="none" stroke="#cfcfcf" stroke-width="0.9"/>
<path d="M3 3.2 L8 3.2 M3 5.2 L8 5.2 M3 7.2 L8 7.2" stroke="#cfcfcf" stroke-width="1.1"/>
</svg>
</div>
</body>
</html>
